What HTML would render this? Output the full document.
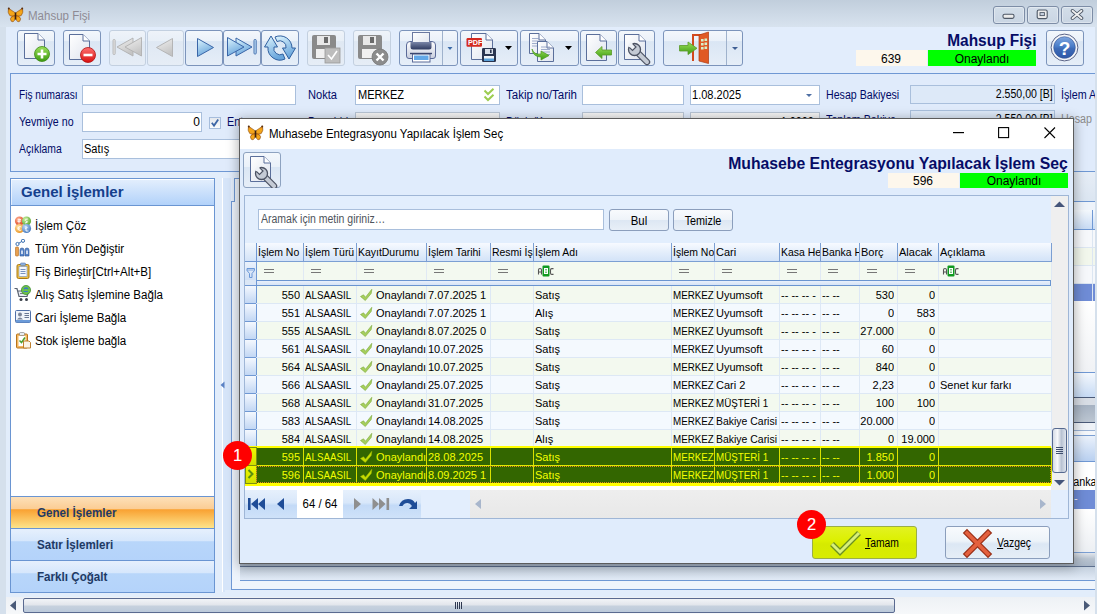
<!DOCTYPE html><html><head><meta charset="utf-8"><style>
*{box-sizing:border-box;margin:0;padding:0}
html,body{width:1097px;height:614px;overflow:hidden}
body{position:relative;background:#e2edfb;font-family:"Liberation Sans",sans-serif}
div{position:absolute}
.tb{position:absolute;border:1px solid #7c94bb;border-radius:3px;background:linear-gradient(#f3f7fc 0%,#eaf1f9 30%,#dae6f4 31%,#e6eef8 100%)}
.tbd{position:absolute;border:1px solid #c3d0e0;border-radius:3px;background:linear-gradient(#eef3f9 0%,#e8eff7 30%,#dfe8f3 31%,#e6edf6 100%)}
.inp{position:absolute;background:#fff;border:1px solid #a7bcd9}
.btn{position:absolute;border:1px solid #8a9dbb;border-radius:3px;background:linear-gradient(#f7f9fc 0%,#edf2f8 45%,#dce6f2 55%,#e6edf6 100%)}
</style></head><body>
<div style="left:0px;top:0px;width:1097px;height:27px;background:linear-gradient(#c1cedc,#d8e3ef)"></div>
<svg style="position:absolute;left:7px;top:7px;" width="17" height="16" viewBox="0 0 17 16"><defs><linearGradient id="bf" x1="0" y1="0" x2="0" y2="1"><stop offset="0" stop-color="#e88a10"/><stop offset="0.5" stop-color="#f6a818"/><stop offset="1" stop-color="#f0a020"/></linearGradient></defs><path d="M8.5 6 L1.5 1.2 Q0.2 5.5 2.8 8.6 Q5 9.8 8.5 8.6Z" fill="url(#bf)" stroke="#8a4a10" stroke-width="0.6"/><path d="M8.5 8.6 Q4 8.6 3.4 11.8 Q3.8 15.2 6 14.8 Q8 13.8 8.5 10.8Z" fill="url(#bf)" stroke="#8a4a10" stroke-width="0.6"/><path d="M8.5 6 L15.5 1.2 Q16.8 5.5 14.2 8.6 Q12 9.8 8.5 8.6Z" fill="url(#bf)" stroke="#8a4a10" stroke-width="0.6"/><path d="M8.5 8.6 Q13 8.6 13.6 11.8 Q13.2 15.2 11 14.8 Q9 13.8 8.5 10.8Z" fill="url(#bf)" stroke="#8a4a10" stroke-width="0.6"/><path d="M8.5 5.5 V12.5" stroke="#3a2010" stroke-width="1.6"/><circle cx="1.8" cy="1.6" r="1" fill="#5a3010"/><circle cx="15.2" cy="1.6" r="1" fill="#5a3010"/></svg>
<div style="left:28px;top:8px;height:16px;line-height:16px;font-size:12px;color:#8e8b94;font-weight:normal;white-space:nowrap;transform:scaleX(0.96);transform-origin:left;">Mahsup Fişi</div>
<div style="left:993px;top:6px;width:32px;height:18px;border:1px solid #7d8da6;border-radius:3px;background:linear-gradient(#d3dee9,#c9d5e3);box-shadow:inset 0 0 0 1px rgba(255,255,255,0.35)"></div>
<div style="left:1027px;top:6px;width:32px;height:18px;border:1px solid #7d8da6;border-radius:3px;background:linear-gradient(#d3dee9,#c9d5e3);box-shadow:inset 0 0 0 1px rgba(255,255,255,0.35)"></div>
<div style="left:1061px;top:6px;width:32px;height:18px;border:1px solid #7d8da6;border-radius:3px;background:linear-gradient(#d3dee9,#c9d5e3);box-shadow:inset 0 0 0 1px rgba(255,255,255,0.35)"></div>
<svg style="position:absolute;left:1002px;top:13px;" width="14" height="7" viewBox="0 0 14 7"><rect x="1" y="1.2" width="11" height="4.2" rx="1.6" fill="#ececec" stroke="#4e5866" stroke-width="1.1"/></svg>
<svg style="position:absolute;left:1036px;top:9px;" width="13" height="11" viewBox="0 0 13 11"><rect x="1.2" y="1" width="10" height="8.6" rx="1.6" fill="#ececec" stroke="#4e5866" stroke-width="1.1"/><rect x="4" y="3.6" width="4.4" height="3" fill="#c8d2e0" stroke="#4e5866" stroke-width="0.9"/></svg>
<svg style="position:absolute;left:1070px;top:9px;" width="14" height="11" viewBox="0 0 14 11"><path d="M2.5 1.8 L11.5 9.2 M11.5 1.8 L2.5 9.2" stroke="#4e5866" stroke-width="3.6" stroke-linecap="round"/><path d="M2.5 1.8 L11.5 9.2 M11.5 1.8 L2.5 9.2" stroke="#efefef" stroke-width="1.8" stroke-linecap="round"/></svg>
<div style="left:0px;top:27px;width:6px;height:587px;background:#d5e0ec"></div>
<div style="left:1090px;top:27px;width:7px;height:587px;background:#d5e0ec"></div>
<div style="left:6px;top:27px;width:1089px;height:46px;background:#e2edfc"></div>
<svg style="position:absolute;left:0;top:0" width="1" height="1"><defs><linearGradient id="pg" x1="0" y1="0" x2="1" y2="1"><stop offset="0" stop-color="#ffffff"/><stop offset="1" stop-color="#dfe4ee"/></linearGradient><linearGradient id="gg" x1="0" y1="0" x2="0" y2="1"><stop offset="0" stop-color="#9be05a"/><stop offset="1" stop-color="#3c9a10"/></linearGradient><linearGradient id="rg" x1="0" y1="0" x2="0" y2="1"><stop offset="0" stop-color="#ff7070"/><stop offset="1" stop-color="#d81010"/></linearGradient><linearGradient id="bl" x1="0" y1="0" x2="0.4" y2="1"><stop offset="0" stop-color="#e0f6fe"/><stop offset="1" stop-color="#6aa6dc"/></linearGradient><linearGradient id="gy" x1="0" y1="0" x2="0.4" y2="1"><stop offset="0" stop-color="#f2f2f2"/><stop offset="1" stop-color="#c4c4c4"/></linearGradient></defs></svg>
<div class="tb" style="left:17px;top:30px;width:38px;height:36px"></div>
<svg style="position:absolute;left:17px;top:30px;" width="38" height="36" viewBox="0 0 38 36"><path d="M7.5 3.5 H21 L27.5 10 V28.5 H7.5Z" fill="url(#pg)" stroke="#5b6f9b" stroke-width="1"/><path d="M21 3.5 V10 H27.5" fill="#fff" stroke="#5b6f9b" stroke-width="1"/><circle cx="25" cy="24" r="7.5" fill="url(#gg)" stroke="#3c8a14" stroke-width="0.8"/><path d="M25 19.5 V28.5 M20.5 24 H29.5" stroke="#fff" stroke-width="2.6"/></svg>
<div class="tb" style="left:63px;top:30px;width:38px;height:36px"></div>
<svg style="position:absolute;left:63px;top:30px;" width="38" height="36" viewBox="0 0 38 36"><path d="M6.5 4.5 H20 L26.5 11 V29.5 H6.5Z" fill="url(#pg)" stroke="#5b6f9b" stroke-width="1"/><path d="M20 4.5 V11 H26.5" fill="#fff" stroke="#5b6f9b" stroke-width="1"/><circle cx="25" cy="25" r="7.5" fill="url(#rg)" stroke="#b01010" stroke-width="0.8"/><path d="M20.5 25 H29.5" stroke="#fff" stroke-width="2.6"/></svg>
<div class="tbd" style="left:109px;top:30px;width:37px;height:36px"></div>
<svg style="position:absolute;left:109px;top:30px;" width="37" height="36" viewBox="0 0 37 36"><rect x="4" y="9.5" width="2.2" height="15" rx="0.8" fill="#e0e0e0" stroke="#b0b0b0" stroke-width="0.8"/><path d="M24 8 V26 L8 17Z" fill="url(#gy)" stroke="#b0b0b0" stroke-width="0.9"/><path d="M32.5 7.5 V26 L16 17Z" fill="url(#gy)" stroke="#b0b0b0" stroke-width="0.9"/></svg>
<div class="tbd" style="left:147px;top:30px;width:37px;height:36px"></div>
<svg style="position:absolute;left:147px;top:30px;" width="37" height="36" viewBox="0 0 37 36"><path d="M25.5 8.5 V26.5 L9.5 17.5Z" fill="url(#gy)" stroke="#b0b0b0" stroke-width="0.9"/></svg>
<div class="tb" style="left:185px;top:30px;width:38px;height:36px"></div>
<svg style="position:absolute;left:185px;top:30px;" width="38" height="36" viewBox="0 0 38 36"><path d="M12.5 8.5 V26.5 L28.5 17.5Z" fill="url(#bl)" stroke="#3a66a8" stroke-width="1"/></svg>
<div class="tb" style="left:223px;top:30px;width:38px;height:36px"></div>
<svg style="position:absolute;left:223px;top:30px;" width="38" height="36" viewBox="0 0 38 36"><path d="M13 8 V26 L29 17Z" fill="url(#bl)" stroke="#3a66a8" stroke-width="1"/><path d="M4.5 7.5 V26 L21 17Z" fill="url(#bl)" stroke="#3a66a8" stroke-width="1"/><rect x="31" y="9.5" width="2.2" height="14.5" rx="0.8" fill="#bfe0f8" stroke="#3a66a8" stroke-width="0.9"/></svg>
<div class="tb" style="left:261px;top:30px;width:38px;height:36px"></div>
<svg style="position:absolute;left:261px;top:30px;" width="38" height="36" viewBox="0 0 38 36"><path d="M3.5 17 L10 6 L16.5 17 L13 17 A6.2 6.2 0 0 0 22 24 L24 29 A12 12 0 0 1 7 17 Z" fill="url(#bl)" stroke="#2f5f9f" stroke-width="1"/><path d="M34.5 18 L28 29 L21.5 18 L25 18 A6.2 6.2 0 0 0 16 11.5 L14 7 A12 12 0 0 1 31 18 Z" fill="url(#bl)" stroke="#2f5f9f" stroke-width="1"/></svg>
<div class="tbd" style="left:307px;top:30px;width:38px;height:36px"></div>
<svg style="position:absolute;left:307px;top:30px;" width="37" height="36" viewBox="0 0 37 36"><rect x="5" y="5" width="24" height="24" rx="2" fill="#8a8a8a"/><rect x="10" y="6" width="13" height="9" fill="#e8e8e8"/><rect x="17" y="7" width="4" height="6" fill="#6a6a6a"/><rect x="9" y="19" width="16" height="9" fill="#f0f0f0"/><rect x="18" y="18" width="15" height="15" fill="#bdbdbd" stroke="#999" stroke-width="0.8"/><path d="M21 25 L24.5 29 L30 21" stroke="#fff" stroke-width="1.6" fill="none"/></svg>
<div class="tbd" style="left:353px;top:30px;width:38px;height:36px"></div>
<svg style="position:absolute;left:353px;top:30px;" width="38" height="36" viewBox="0 0 38 36"><rect x="5" y="5" width="24" height="24" rx="2" fill="#8a8a8a"/><rect x="10" y="6" width="13" height="9" fill="#e8e8e8"/><rect x="17" y="7" width="4" height="6" fill="#6a6a6a"/><rect x="9" y="19" width="16" height="9" fill="#f0f0f0"/><circle cx="27" cy="27" r="8" fill="#8c8c8c" stroke="#777" stroke-width="0.8"/><path d="M23.5 23.5 L30.5 30.5 M30.5 23.5 L23.5 30.5" stroke="#fff" stroke-width="2.4"/></svg>
<div class="tb" style="left:399px;top:30px;width:59px;height:36px"></div>
<div style="left:442px;top:31px;width:1px;height:34px;background:#9fb2cc"></div>
<svg style="position:absolute;left:399px;top:30px;" width="59" height="36" viewBox="0 0 59 36"><defs><linearGradient id="pb" x1="0" y1="0" x2="0" y2="1"><stop offset="0" stop-color="#ffffff"/><stop offset="1" stop-color="#c8cede"/></linearGradient><linearGradient id="pd" x1="0" y1="0" x2="0" y2="1"><stop offset="0" stop-color="#7a86a8"/><stop offset="1" stop-color="#2e3a60"/></linearGradient></defs><path d="M7.5 15 Q7.5 11.5 11 11.5 H33 Q36.5 11.5 36.5 15 V26 Q36.5 28.5 34 28.5 H10 Q7.5 28.5 7.5 26Z" fill="url(#pb)" stroke="#5a6a98" stroke-width="1"/><rect x="13.5" y="2.5" width="17" height="11.5" fill="url(#pg)" stroke="#6a78a0" stroke-width="1"/><path d="M11.5 12 H32.5 V17 Q32.5 19.5 30 19.5 H14 Q11.5 19.5 11.5 17Z" fill="url(#pd)"/><rect x="13.5" y="24" width="17.5" height="8" fill="#fff" stroke="#5a6a98" stroke-width="1"/><rect x="15" y="25.5" width="14.5" height="4.5" fill="#62a8e8"/><path d="M11 23.5 H33" stroke="#3a4670" stroke-width="1.4"/><path d="M48.5 17 L53.5 17 L51 20Z" fill="#3a6aa8"/></svg>
<div class="tb" style="left:460px;top:30px;width:58px;height:36px"></div>
<svg style="position:absolute;left:460px;top:30px;" width="58" height="36" viewBox="0 0 58 36"><path d="M11.5 3.5 H26 L32.5 10 V29.5 H11.5Z" fill="url(#pg)" stroke="#5b6f9b" stroke-width="1"/><path d="M26 3.5 V10 H32.5" fill="#fff" stroke="#5b6f9b" stroke-width="1"/><rect x="6.5" y="8" width="15.5" height="8.8" rx="1.2" fill="#d42a20"/><text x="8" y="15.2" font-size="7.2" font-weight="bold" fill="#fff" font-family="Liberation Sans">PDF</text><rect x="22" y="18" width="14" height="14" rx="1.2" fill="#2a3550"/><rect x="25" y="19" width="8" height="5" fill="#d8dee8"/><rect x="30" y="19.5" width="1.6" height="3.5" fill="#2a3550"/><rect x="24" y="26" width="10" height="5" fill="#f0f4f8"/><rect x="24" y="28.5" width="10" height="2.5" fill="#5aa0d8"/><path d="M45 16 L52 16 L48.5 20Z" fill="#000"/></svg>
<div class="tb" style="left:520px;top:30px;width:59px;height:36px"></div>
<svg style="position:absolute;left:520px;top:30px;" width="59" height="36" viewBox="0 0 59 36"><path d="M9.5 3.5 H19 L25.5 10 V23.5 H9.5Z" fill="url(#pg)" stroke="#5b6f9b" stroke-width="1"/><path d="M19 3.5 V10 H25.5" fill="#fff" stroke="#5b6f9b" stroke-width="1"/><path d="M12 8.5 H19 M12 11 H19 M12 13.5 H19 M12 16 H19" stroke="#8a9ac0" stroke-width="0.8"/><path d="M17.5 11.5 H27 L33.5 18 V31.5 H17.5Z" fill="url(#pg)" stroke="#5b6f9b" stroke-width="1"/><path d="M27 11.5 V18 H33.5" fill="#fff" stroke="#5b6f9b" stroke-width="1"/><path d="M21 17 H30 M21 19.5 H30 M21 22 H30 M21 24.5 H30" stroke="#8a9ac0" stroke-width="0.8"/><path d="M12 19 Q14 25 21 24 V21 L29 25.5 L21 30 V27 Q13 27 12 19Z" fill="url(#gg)" stroke="#4a9a20" stroke-width="0.7"/><path d="M45 16 L52 16 L48.5 20Z" fill="#000"/></svg>
<div class="tb" style="left:580px;top:30px;width:37px;height:36px"></div>
<svg style="position:absolute;left:580px;top:30px;" width="37" height="36" viewBox="0 0 37 36"><path d="M6.5 4.5 H20 L26.5 11 V30.5 H6.5Z" fill="url(#pg)" stroke="#5b6f9b" stroke-width="1"/><path d="M20 4.5 V11 H26.5" fill="#fff" stroke="#5b6f9b" stroke-width="1"/><path d="M15.5 22.5 L22 16.5 V20 H31.5 V25 H22 V28.5Z" fill="url(#gg)" stroke="#5a9a2a" stroke-width="0.8"/></svg>
<div class="tb" style="left:618px;top:30px;width:37px;height:36px"></div>
<svg style="position:absolute;left:618px;top:30px;" width="37" height="36" viewBox="0 0 37 36"><path d="M6.5 4.5 H21 L27.5 11 V29.5 H6.5Z" fill="url(#pg)" stroke="#5b6f9b" stroke-width="1"/><path d="M21 4.5 V11 H27.5" fill="#fff" stroke="#5b6f9b" stroke-width="1"/><path d="M18 21 L29 32" stroke="#4c5262" stroke-width="6.4" stroke-linecap="round"/><path d="M18 21 L29 32" stroke="#c4cad4" stroke-width="4" stroke-linecap="round"/><circle cx="16.5" cy="19.5" r="6" fill="#c4cad4" stroke="#4c5262" stroke-width="1.3"/><path d="M9.5 15.5 L14.5 20.5 L18 17 L13 12Z" fill="#eef1f6"/><path d="M11.3 17.3 L14.5 20.5 L18 17 L14.8 13.8" fill="none" stroke="#4c5262" stroke-width="1.2"/></svg>
<div class="tb" style="left:663px;top:30px;width:80px;height:36px"></div>
<div style="left:726px;top:31px;width:1px;height:34px;background:#9fb2cc"></div>
<svg style="position:absolute;left:663px;top:30px;" width="80" height="36" viewBox="0 0 80 36"><path d="M29 4 H45 V31 H43 V6 H31 V31 H29Z" fill="#d24a1e"/><path d="M36 5 L45.5 2 V33.5 L36 31Z" fill="#e05a24" stroke="#b03a10" stroke-width="0.7"/><path d="M38 9 h2.6 v2.6 h-2.6z M41.5 8.5 h2.6 v2.6 h-2.6z M38 13 h2.6 v2.6 h-2.6z M41.5 12.5 h2.6 v2.6 h-2.6z M38 17 h2.6 v2.6 h-2.6z M41.5 16.5 h2.6 v2.6 h-2.6z" fill="#d8f0c8"/><path d="M16.5 15.5 H25 V12 L34 18.3 L25 24.6 V21 H16.5Z" fill="url(#gg)" stroke="#5a9a2a" stroke-width="0.8"/><path d="M69 17 L75 17 L72 20Z" fill="#3e5f94"/></svg>
<div style="right:61px;top:32px;height:18px;line-height:18px;font-size:16px;color:#060c66;font-weight:bold;white-space:nowrap;transform:scaleX(0.965);transform-origin:right;">Mahsup Fişi</div>
<div style="left:856px;top:50px;width:71px;height:16px;background:#fdf7ec"></div>
<div style="left:591px;width:600px;text-align:center;top:51px;height:16px;line-height:16px;font-size:12px;color:#000;font-weight:normal;white-space:nowrap;">639</div>
<div style="left:928px;top:50px;width:108px;height:16px;background:#00ff00"></div>
<div style="left:682px;width:600px;text-align:center;top:51px;height:16px;line-height:16px;font-size:12px;color:#000;font-weight:normal;white-space:nowrap;">Onaylandı</div>
<div class="tb" style="left:1046px;top:30px;width:38px;height:36px"></div>
<svg style="position:absolute;left:1046px;top:30px;" width="38" height="36" viewBox="0 0 38 36"><defs><linearGradient id="hb" x1="0" y1="0" x2="0" y2="1"><stop offset="0" stop-color="#7ea6e0"/><stop offset="0.45" stop-color="#4a7cc8"/><stop offset="0.55" stop-color="#3d6bb8"/><stop offset="1" stop-color="#2f58a8"/></linearGradient></defs><circle cx="18.5" cy="17.5" r="13.4" fill="#f4f6fa" stroke="#5a6488" stroke-width="1"/><circle cx="18.5" cy="17.5" r="10.8" fill="url(#hb)" stroke="#3a5590" stroke-width="0.6"/><text x="18.5" y="24.5" text-anchor="middle" font-size="19" font-weight="bold" fill="#fff" font-family="Liberation Sans">?</text></svg>
<div style="left:10px;top:73px;width:1095px;height:99px;background:#e0ebfb;border:1px solid #6f98d4"></div>
<div style="left:19px;top:85px;height:20px;line-height:20px;font-size:12.5px;color:#000a66;font-weight:normal;white-space:nowrap;transform:scaleX(0.81);transform-origin:left;">Fiş numarası</div>
<div style="left:82px;top:85px;width:214px;height:20px;background:#fff;border:1px solid #a9bfdc"></div>
<div style="left:308px;top:85px;height:20px;line-height:20px;font-size:12.5px;color:#000a66;font-weight:normal;white-space:nowrap;transform:scaleX(0.89);transform-origin:left;">Nokta</div>
<div style="left:355px;top:85px;width:145px;height:20px;background:#fff;border:1px solid #a9bfdc"></div>
<div style="left:358px;top:85px;height:20px;line-height:20px;font-size:12px;color:#000;font-weight:normal;white-space:nowrap;transform:scaleX(0.92);transform-origin:left;">MERKEZ</div>
<svg style="position:absolute;left:483px;top:88px;" width="12" height="15" viewBox="0 0 12 15"><path d="M1.5 2.5 L5 6 L10.5 0.8" stroke="#9ccc50" stroke-width="2" fill="none"/><path d="M1.5 8.5 L5 12 L10.5 6.8" stroke="#9ccc50" stroke-width="2" fill="none"/></svg>
<div style="left:506px;top:85px;height:20px;line-height:20px;font-size:12.5px;color:#000a66;font-weight:normal;white-space:nowrap;transform:scaleX(0.92);transform-origin:left;">Takip no/Tarih</div>
<div style="left:582px;top:85px;width:102px;height:20px;background:#fff;border:1px solid #a9bfdc"></div>
<div style="left:690px;top:85px;width:130px;height:20px;background:#fff;border:1px solid #a9bfdc"></div>
<div style="left:692px;top:85px;height:20px;line-height:20px;font-size:12px;color:#000;font-weight:normal;white-space:nowrap;transform:scaleX(0.92);transform-origin:left;">1.08.2025</div>
<svg style="position:absolute;left:805px;top:93px;" width="8" height="5" viewBox="0 0 8 5"><path d="M1 1 L7 1 L4 4Z" fill="#4e6fa4"/></svg>
<div style="left:826px;top:85px;height:20px;line-height:20px;font-size:12.5px;color:#000a66;font-weight:normal;white-space:nowrap;transform:scaleX(0.85);transform-origin:left;">Hesap Bakiyesi</div>
<div style="left:910px;top:85px;width:145px;height:19px;background:#dde9f8;border:1px solid #a9bfdc"></div>
<div style="right:44px;top:84px;height:20px;line-height:20px;font-size:12px;color:#000;font-weight:normal;white-space:nowrap;transform:scaleX(0.88);transform-origin:right;">2.550,00 [B]</div>
<div style="left:1061px;top:85px;height:20px;line-height:20px;font-size:12.5px;color:#000a66;font-weight:normal;white-space:nowrap;transform:scaleX(0.86);transform-origin:left;">İşlem Açıklama</div>
<div style="left:19px;top:112px;height:20px;line-height:20px;font-size:12.5px;color:#000a66;font-weight:normal;white-space:nowrap;transform:scaleX(0.85);transform-origin:left;">Yevmiye no</div>
<div style="left:82px;top:112px;width:120px;height:20px;background:#fff;border:1px solid #a9bfdc"></div>
<div style="right:897px;top:112px;height:20px;line-height:20px;font-size:12px;color:#000;font-weight:normal;white-space:nowrap;">0</div>
<div style="left:209px;top:117px;width:12px;height:12px;background:linear-gradient(#e4e8ee,#fafbfc);border:1px solid #a6bddc"></div>
<svg style="position:absolute;left:209px;top:117px;" width="12" height="12" viewBox="0 0 12 12"><path d="M2.8 5.8 L5 8.6 L9.2 2.4" stroke="#3d66a6" stroke-width="1.8" fill="none"/></svg>
<div style="left:227px;top:112px;height:20px;line-height:20px;font-size:12.5px;color:#000a66;font-weight:normal;white-space:nowrap;transform:scaleX(0.86);transform-origin:left;">Entegre</div>
<div style="left:308px;top:112px;height:20px;line-height:20px;font-size:12.5px;color:#000a66;font-weight:normal;white-space:nowrap;transform:scaleX(0.86);transform-origin:left;">Para birimi</div>
<div style="left:506px;top:112px;height:20px;line-height:20px;font-size:12.5px;color:#000a66;font-weight:normal;white-space:nowrap;transform:scaleX(0.86);transform-origin:left;">Döviz/Kur</div>
<div style="left:585px;top:112px;height:20px;line-height:20px;font-size:12px;color:#000;font-weight:normal;white-space:nowrap;transform:scaleX(0.9);transform-origin:left;">TL</div>
<div style="left:355px;top:112px;width:145px;height:20px;background:linear-gradient(#f5f5f5,#e4e4e4);border:1px solid #b8c4d4"></div>
<div style="left:582px;top:112px;width:102px;height:20px;background:linear-gradient(#f5f5f5,#e4e4e4);border:1px solid #b8c4d4"></div>
<div style="left:690px;top:112px;width:130px;height:20px;background:linear-gradient(#f5f5f5,#e4e4e4);border:1px solid #b8c4d4"></div>
<div style="right:283px;top:112px;height:20px;line-height:20px;font-size:12px;color:#000;font-weight:normal;white-space:nowrap;transform:scaleX(0.9);transform-origin:right;">1,0000</div>
<div style="left:826px;top:110px;height:20px;line-height:20px;font-size:12.5px;color:#000a66;font-weight:normal;white-space:nowrap;transform:scaleX(0.86);transform-origin:left;">Toplam Bakiye</div>
<div style="left:910px;top:110px;width:145px;height:19px;background:#dde9f8;border:1px solid #a9bfdc"></div>
<div style="right:44px;top:109px;height:20px;line-height:20px;font-size:12px;color:#000;font-weight:normal;white-space:nowrap;transform:scaleX(0.88);transform-origin:right;">2.550,00 [B]</div>
<div style="left:1061px;top:109px;height:20px;line-height:20px;font-size:12.5px;color:#8c8c8c;font-weight:normal;white-space:nowrap;transform:scaleX(0.86);transform-origin:left;">Hesap</div>
<div style="left:19px;top:139px;height:20px;line-height:20px;font-size:12.5px;color:#000a66;font-weight:normal;white-space:nowrap;transform:scaleX(0.83);transform-origin:left;">Açıklama</div>
<div style="left:82px;top:139px;width:700px;height:20px;background:#fff;border:1px solid #a9bfdc"></div>
<div style="left:84px;top:139px;height:20px;line-height:20px;font-size:12px;color:#000;font-weight:normal;white-space:nowrap;transform:scaleX(0.92);transform-origin:left;">Satış</div>
<div style="left:1095px;top:27px;width:2px;height:587px;background:#d5e0ec"></div>
<div style="left:10px;top:178px;width:205px;height:415px;background:#fff;border:1px solid #6a95d2"></div>
<div style="left:10px;top:178px;width:205px;height:28px;background:linear-gradient(#e4effd,#b2d2fa);border:1px solid #6a95d2;box-shadow:inset 0 1px 0 #fff, inset 1px 0 0 rgba(255,255,255,0.6)"></div>
<div style="left:21px;top:183px;height:18px;line-height:18px;font-size:15px;color:#153f8c;font-weight:bold;white-space:nowrap;">Genel İşlemler</div>
<div style="left:35px;top:218px;height:16px;line-height:16px;font-size:12.5px;color:#000;font-weight:normal;white-space:nowrap;transform:scaleX(0.925);transform-origin:left;">İşlem Çöz</div>
<div style="left:35px;top:241px;height:16px;line-height:16px;font-size:12.5px;color:#000;font-weight:normal;white-space:nowrap;transform:scaleX(0.925);transform-origin:left;">Tüm Yön Değiştir</div>
<div style="left:35px;top:264px;height:16px;line-height:16px;font-size:12.5px;color:#000;font-weight:normal;white-space:nowrap;transform:scaleX(0.925);transform-origin:left;">Fiş Birleştir[Ctrl+Alt+B]</div>
<div style="left:35px;top:287px;height:16px;line-height:16px;font-size:12.5px;color:#000;font-weight:normal;white-space:nowrap;transform:scaleX(0.925);transform-origin:left;">Alış Satış İşlemine Bağla</div>
<div style="left:35px;top:310px;height:16px;line-height:16px;font-size:12.5px;color:#000;font-weight:normal;white-space:nowrap;transform:scaleX(0.925);transform-origin:left;">Cari İşleme Bağla</div>
<div style="left:35px;top:333px;height:16px;line-height:16px;font-size:12.5px;color:#000;font-weight:normal;white-space:nowrap;transform:scaleX(0.925);transform-origin:left;">Stok işleme bağla</div>
<svg style="position:absolute;left:14px;top:216px;" width="18" height="18" viewBox="0 0 18 18"><defs><radialGradient id="c1" cx="0.35" cy="0.3" r="0.8"><stop offset="0" stop-color="#ffb090"/><stop offset="1" stop-color="#d83a18"/></radialGradient><radialGradient id="c2" cx="0.35" cy="0.3" r="0.8"><stop offset="0" stop-color="#c8f0a0"/><stop offset="1" stop-color="#50a028"/></radialGradient><radialGradient id="c3" cx="0.35" cy="0.3" r="0.8"><stop offset="0" stop-color="#ffe0a0"/><stop offset="1" stop-color="#e8901c"/></radialGradient><radialGradient id="c4" cx="0.35" cy="0.3" r="0.8"><stop offset="0" stop-color="#b8d8f8"/><stop offset="1" stop-color="#3a70b8"/></radialGradient></defs><circle cx="5.5" cy="5" r="4.6" fill="url(#c1)"/><circle cx="12.5" cy="5" r="4.6" fill="url(#c2)"/><circle cx="5.5" cy="12.5" r="4.6" fill="url(#c3)"/><circle cx="12.5" cy="12.5" r="4.6" fill="url(#c4)"/><path d="M5 2.5 V7.5 M3.5 4 L7 3.5 M3.5 5.5 L7 5" stroke="#fff" stroke-width="0.9"/><path d="M13.8 3 Q11 2.8 11.3 4.5 Q11.8 5.5 13.3 5.5 Q14.3 6.5 11 7" stroke="#fff" stroke-width="0.9" fill="none"/><path d="M7.3 11 Q6 10 4.5 11 Q3.5 12.5 4.5 14 Q6 15 7.3 14 M3.5 12 H6 M3.5 13 H6" stroke="#fff" stroke-width="0.8" fill="none"/><path d="M12 10 V15 H14.5 M11 12.5 L13.5 11.5" stroke="#fff" stroke-width="0.9" fill="none"/></svg>
<svg style="position:absolute;left:14px;top:239px;" width="18" height="18" viewBox="0 0 18 18"><circle cx="3.5" cy="5" r="1.6" fill="none" stroke="#3a6fb0" stroke-width="1"/><circle cx="9" cy="1.8" r="1.6" fill="none" stroke="#3a6fb0" stroke-width="1"/><path d="M4.8 4.2 L7.6 2.6" stroke="#3a6fb0" stroke-width="1"/><rect x="1.5" y="8" width="3" height="9" rx="0.8" fill="#e8a050" stroke="#b06a20" stroke-width="0.6"/><path d="M6 17 V11 Q6 9 8 9 Q10 9 10 11 V17Z" fill="#5a88cc" stroke="#2a5090" stroke-width="0.6"/><path d="M11 17 V11 Q11 9 13 9 Q15 9 15 11 V17Z" fill="#5a88cc" stroke="#2a5090" stroke-width="0.6"/><rect x="7.3" y="11.5" width="1.4" height="3.5" fill="#fff"/><rect x="12.3" y="11.5" width="1.4" height="3.5" fill="#fff"/></svg>
<svg style="position:absolute;left:14px;top:262px;" width="18" height="18" viewBox="0 0 18 18"><rect x="3" y="2.5" width="12" height="14" rx="1.5" fill="#f0c040" stroke="#a87818" stroke-width="1"/><rect x="5" y="4.5" width="8" height="10" fill="#f4f8fe" stroke="#7890c0" stroke-width="0.6"/><path d="M6.5 7.5 H11.5 M6.5 9.5 H11.5 M6.5 11.5 H11.5" stroke="#5a78b0" stroke-width="0.8"/><rect x="6.5" y="1" width="5" height="2.6" rx="0.8" fill="#8ab0e0" stroke="#5a78b0" stroke-width="0.6"/></svg>
<svg style="position:absolute;left:14px;top:285px;" width="18" height="18" viewBox="0 0 18 18"><path d="M0.5 3.5 H3 L5 11.5 H13 L14.5 6 H4" fill="#e8ecf2" stroke="#5a6270" stroke-width="1.2"/><path d="M6 8.5 H13" stroke="#5a6270" stroke-width="0.8"/><circle cx="7" cy="14.5" r="1.5" fill="#3a404a"/><circle cx="12.5" cy="14.5" r="1.5" fill="#3a404a"/><circle cx="12" cy="5" r="4.6" fill="#6cc04a" stroke="#3a8a2a" stroke-width="0.7"/><path d="M10 4 Q12 2 14 4 M9.5 6.5 H14" stroke="#3a7ac8" stroke-width="1.2" fill="none"/></svg>
<svg style="position:absolute;left:14px;top:308px;" width="18" height="18" viewBox="0 0 18 18"><rect x="1.5" y="2.5" width="15" height="12" rx="1" fill="#f0f4fa" stroke="#5070a8" stroke-width="1"/><rect x="2" y="12" width="14" height="2.5" fill="#6a9ad8"/><circle cx="6" cy="6.5" r="2" fill="#7a8498"/><path d="M3 11.5 Q6 7.5 9 11.5Z" fill="#7a8498"/><path d="M10.5 5.5 H15 M10.5 7.5 H15 M10.5 9.5 H15" stroke="#5a6a88" stroke-width="0.9"/></svg>
<svg style="position:absolute;left:14px;top:331px;" width="18" height="18" viewBox="0 0 18 18"><rect x="2.5" y="3" width="11" height="14" rx="1" fill="#f4b860" stroke="#b8741c" stroke-width="1"/><rect x="4.5" y="5" width="7" height="10" fill="#fff"/><rect x="5.5" y="1.5" width="5" height="3" rx="1" fill="#e8ecf0" stroke="#777" stroke-width="0.6"/><path d="M5.5 9.5 L7.5 11.5 L11 6.5" stroke="#4aa030" stroke-width="1.5" fill="none"/><path d="M9.5 10 H15 L16.5 11.5 V17 H9.5Z" fill="#fbf4e8" stroke="#b8741c" stroke-width="0.9"/></svg>
<div style="left:10px;top:496px;width:205px;height:33px;background:linear-gradient(#fde0b8 0%,#fbcd94 38%,#f9a232 41%,#fbc25e 70%,#fde48a 100%);border:1px solid #6a95d2"></div>
<div style="left:37px;top:504px;height:18px;line-height:18px;font-size:12.5px;color:#1f3a64;font-weight:bold;white-space:nowrap;transform:scaleX(0.93);transform-origin:left;">Genel İşlemler</div>
<div style="left:10px;top:528px;width:205px;height:33px;background:linear-gradient(#e6f0fd 0%,#d6e7fc 38%,#b8d6fa 41%,#b4d3fa 100%);border:1px solid #6a95d2"></div>
<div style="left:37px;top:536px;height:18px;line-height:18px;font-size:12.5px;color:#1f3a64;font-weight:bold;white-space:nowrap;transform:scaleX(0.93);transform-origin:left;">Satır İşlemleri</div>
<div style="left:10px;top:560px;width:205px;height:33px;background:linear-gradient(#e6f0fd 0%,#d6e7fc 38%,#b8d6fa 41%,#b4d3fa 100%);border:1px solid #6a95d2"></div>
<div style="left:37px;top:568px;height:18px;line-height:18px;font-size:12.5px;color:#1f3a64;font-weight:bold;white-space:nowrap;transform:scaleX(0.93);transform-origin:left;">Farklı Çoğalt</div>
<div style="left:215px;top:178px;width:16px;height:415px;background:#e2edfb"></div>
<div style="left:222px;top:178px;width:1px;height:414px;background:#ffffff"></div>
<div style="left:223px;top:178px;width:8px;height:414px;background:#d6e5f9"></div>
<svg style="position:absolute;left:220px;top:381px;" width="5" height="8" viewBox="0 0 5 8"><path d="M4.5 0.5 L0.5 4 L4.5 7.5Z" fill="#5b82c4"/></svg>
<div style="left:231px;top:201px;width:864px;height:389px;background:#e2edfb;border:1px solid #6f98d4"></div>
<div style="left:234px;top:178px;width:861px;height:25px;background:#e2edfb;border:1px solid #6f98d4;border-bottom:none"></div>
<div style="left:235px;top:179px;width:5px;height:23px;background:#eef4fc"></div>
<div style="left:232px;top:202px;width:8px;height:387px;background:#eef4fc"></div>
<div style="left:240px;top:200px;width:855px;height:381px;background:#ffffff;border:1px solid #6f98d4"></div>
<div style="left:1073px;top:172px;width:22px;height:30px;background:linear-gradient(#e6edf6,#dbe5f1)"></div>
<div style="left:1073px;top:201px;width:22px;height:1px;background:#6f98d4"></div>
<div style="left:1073px;top:202px;width:22px;height:8px;background:#eef3fa"></div>
<div style="left:1073px;top:210px;width:22px;height:20px;background:linear-gradient(#f4f8fd,#c8dbf4);border-bottom:1px solid #6f98d4"></div>
<div style="left:1092px;top:210px;width:1px;height:20px;background:#6f98d4"></div>
<div style="left:1073px;top:230px;width:22px;height:17px;background:#f6f8fb"></div>
<div style="left:1073px;top:247px;width:22px;height:1px;background:#dce6f2"></div>
<div style="left:1073px;top:248px;width:22px;height:17px;background:#f2f7ec"></div>
<div style="left:1073px;top:265px;width:22px;height:1px;background:#dce6f2"></div>
<div style="left:1073px;top:266px;width:22px;height:17px;background:#f6f8fb"></div>
<div style="left:1073px;top:283px;width:22px;height:1px;background:#dce6f2"></div>
<div style="left:1073px;top:284px;width:22px;height:17px;background:#6f8cd6"></div>
<div style="left:1092px;top:230px;width:1px;height:71px;background:#dce6f2"></div>
<div style="left:1073px;top:301px;width:22px;height:71px;background:linear-gradient(#ffffff,#f0f2f5)"></div>
<div style="left:1073px;top:372px;width:22px;height:1px;background:#6f98d4"></div>
<div style="left:1073px;top:373px;width:22px;height:24px;background:linear-gradient(#f4f8fd,#c6daf4)"></div>
<div style="left:1073px;top:397px;width:22px;height:1px;background:#4a5a78"></div>
<div style="left:1073px;top:398px;width:22px;height:7px;background:#d8dde5"></div>
<div style="left:1073px;top:405px;width:22px;height:17px;background:linear-gradient(#a6b2c2,#bcc6d2)"></div>
<div style="left:1073px;top:422px;width:22px;height:1px;background:#4a5a78"></div>
<div style="left:1073px;top:423px;width:22px;height:7px;background:#eef2f7"></div>
<div style="left:1073px;top:430px;width:22px;height:1px;background:#9bb3d6"></div>
<div style="left:1073px;top:431px;width:22px;height:4px;background:#f4f7fb"></div>
<div style="left:1073px;top:435px;width:22px;height:1px;background:#7b9fd3"></div>
<div style="left:1073px;top:436px;width:22px;height:25px;background:linear-gradient(#eaf1fb,#b9d0f0)"></div>
<div style="left:1073px;top:461px;width:22px;height:1px;background:#6f98d4"></div>
<div style="left:1073px;top:462px;width:22px;height:28px;background:#ffffff"></div>
<div style="left:1066px;top:474px;height:16px;line-height:16px;font-size:12px;color:#000;font-weight:normal;white-space:nowrap;transform:scaleX(0.9);transform-origin:left;">Banka</div>
<div style="left:1073px;top:490px;width:22px;height:19px;background:#6f8cd6"></div>
<div style="left:1074px;top:490px;height:16px;line-height:16px;font-size:11px;color:#fff;font-weight:normal;white-space:nowrap;">-</div>
<div style="left:1073px;top:509px;width:22px;height:43px;background:linear-gradient(#ffffff,#eceff3)"></div>
<div style="left:240px;top:552px;width:855px;height:1px;background:#7b9fd3"></div>
<div style="left:240px;top:553px;width:855px;height:13px;background:linear-gradient(#e2e6ec 0%,#b8c3d0 45%,#a8b5c6 100%)"></div>
<div style="left:240px;top:566px;width:855px;height:1px;background:#5d6f8e"></div>
<div style="left:240px;top:567px;width:855px;height:13px;background:linear-gradient(#c4d0de,#e2ebf7)"></div>
<div style="left:240px;top:580px;width:855px;height:1px;background:#6f98d4"></div>
<div style="left:232px;top:581px;width:863px;height:8px;background:#f0f5fc"></div>
<div style="left:231px;top:589px;width:864px;height:1px;background:#6f98d4"></div>
<div style="left:225px;top:590px;width:870px;height:7px;background:#e2edfb"></div>
<div style="left:1095px;top:27px;width:2px;height:587px;background:#d5e0ec"></div>
<div style="left:6px;top:597px;width:1089px;height:17px;background:linear-gradient(#eef1f5,#f6f8fa)"></div>
<svg style="position:absolute;left:9px;top:600px;" width="8" height="11" viewBox="0 0 8 11"><path d="M7 0.5 L1 5.5 L7 10.5Z" fill="#4a5a78"/></svg>
<div style="left:23px;top:598px;width:872px;height:15px;border:1px solid #5a6a90;border-radius:2px;background:linear-gradient(#f2f4f7 0%,#e2e6ec 45%,#c6d1de 55%,#bccadb 100%)"></div>
<svg style="position:absolute;left:455px;top:601px;" width="10" height="9" viewBox="0 0 10 9"><rect x="0" y="1" width="1" height="7" fill="#2e3850"/><rect x="2" y="1" width="1" height="7" fill="#2e3850"/><rect x="4" y="1" width="1" height="7" fill="#2e3850"/><rect x="6" y="1" width="1" height="7" fill="#2e3850"/></svg>
<svg style="position:absolute;left:1083px;top:600px;" width="8" height="11" viewBox="0 0 8 11"><path d="M1 0.5 L7 5.5 L1 10.5Z" fill="#4a5a78"/></svg>
<div style="left:239px;top:118px;width:835px;height:446px;box-shadow:0 2px 11px 1px rgba(0,0,0,0.30)"></div>
<div style="left:239px;top:118px;width:835px;height:446px;background:#e0ecfc;border:1px solid #5c5c5c"></div>
<div style="left:240px;top:119px;width:833px;height:30px;background:#ffffff"></div>
<svg style="position:absolute;left:247px;top:125px;" width="17" height="16" viewBox="0 0 17 16"><defs><linearGradient id="bf" x1="0" y1="0" x2="0" y2="1"><stop offset="0" stop-color="#e88a10"/><stop offset="0.5" stop-color="#f6a818"/><stop offset="1" stop-color="#f0a020"/></linearGradient></defs><path d="M8.5 6 L1.5 1.2 Q0.2 5.5 2.8 8.6 Q5 9.8 8.5 8.6Z" fill="url(#bf)" stroke="#8a4a10" stroke-width="0.6"/><path d="M8.5 8.6 Q4 8.6 3.4 11.8 Q3.8 15.2 6 14.8 Q8 13.8 8.5 10.8Z" fill="url(#bf)" stroke="#8a4a10" stroke-width="0.6"/><path d="M8.5 6 L15.5 1.2 Q16.8 5.5 14.2 8.6 Q12 9.8 8.5 8.6Z" fill="url(#bf)" stroke="#8a4a10" stroke-width="0.6"/><path d="M8.5 8.6 Q13 8.6 13.6 11.8 Q13.2 15.2 11 14.8 Q9 13.8 8.5 10.8Z" fill="url(#bf)" stroke="#8a4a10" stroke-width="0.6"/><path d="M8.5 5.5 V12.5" stroke="#3a2010" stroke-width="1.6"/><circle cx="1.8" cy="1.6" r="1" fill="#5a3010"/><circle cx="15.2" cy="1.6" r="1" fill="#5a3010"/></svg>
<div style="left:269px;top:126px;height:16px;line-height:16px;font-size:12.5px;color:#000;font-weight:normal;white-space:nowrap;transform:scaleX(0.92);transform-origin:left;">Muhasebe Entegrasyonu Yapılacak İşlem Seç</div>
<svg style="position:absolute;left:953px;top:132px;" width="12" height="2" viewBox="0 0 12 2"><rect x="0" y="0" width="11" height="1.2" fill="#000"/></svg>
<svg style="position:absolute;left:998px;top:127px;" width="12" height="12" viewBox="0 0 12 12"><rect x="0.6" y="0.6" width="10" height="10" fill="none" stroke="#000" stroke-width="1.1"/></svg>
<svg style="position:absolute;left:1044px;top:127px;" width="12" height="12" viewBox="0 0 12 12"><path d="M0.5 0.5 L11 11 M11 0.5 L0.5 11" stroke="#000" stroke-width="1.1"/></svg>
<div style="left:243px;top:152px;width:38px;height:36px;border:1px solid #8da2c0;border-radius:3px;background:linear-gradient(#f3f7fc 0%,#eaf1f9 40%,#dae6f4 41%,#e6eef8 100%)"></div>
<svg style="position:absolute;left:243px;top:152px;" width="38" height="36" viewBox="0 0 38 36"><path d="M7.5 4.5 H21 L27.5 11 V29.5 H7.5Z" fill="url(#pg)" stroke="#5b6f9b" stroke-width="1"/><path d="M21 4.5 V11 H27.5" fill="#fff" stroke="#5b6f9b" stroke-width="1"/><path d="M20 23 L31 34" stroke="#4c5262" stroke-width="6.4" stroke-linecap="round"/><path d="M20 23 L31 34" stroke="#c4cad4" stroke-width="4" stroke-linecap="round"/><circle cx="18.5" cy="21.5" r="6" fill="#c4cad4" stroke="#4c5262" stroke-width="1.3"/><path d="M11.5 17.5 L16.5 22.5 L20 19 L15 14Z" fill="#eef1f6"/><path d="M13.3 19.3 L16.5 22.5 L20 19 L16.8 15.8" fill="none" stroke="#4c5262" stroke-width="1.2"/></svg>
<div style="right:29px;top:154px;height:19px;line-height:19px;font-size:16px;color:#060c66;font-weight:bold;white-space:nowrap;transform:scaleX(0.985);transform-origin:right;">Muhasebe Entegrasyonu Yapılacak İşlem Seç</div>
<div style="left:888px;top:173px;width:71px;height:15px;background:#fdf7ec"></div>
<div style="left:623px;width:600px;text-align:center;top:173px;height:16px;line-height:16px;font-size:12px;color:#000;font-weight:normal;white-space:nowrap;">596</div>
<div style="left:960px;top:173px;width:108px;height:15px;background:#00ff00"></div>
<div style="left:714px;width:600px;text-align:center;top:173px;height:16px;line-height:16px;font-size:12px;color:#000;font-weight:normal;white-space:nowrap;">Onaylandı</div>
<div style="left:244px;top:195px;width:825px;height:324px;background:#e2eefd;border:1px solid #9fb6d6"></div>
<div style="left:258px;top:209px;width:346px;height:21px;background:#fff;border:1px solid #a9bfdc"></div>
<div style="left:261px;top:210px;height:19px;line-height:19px;font-size:12px;color:#4e545c;font-weight:normal;white-space:nowrap;transform:scaleX(0.875);transform-origin:left;">Aramak için metin giriniz…</div>
<div style="left:609px;top:209px;width:60px;height:22px;border:1px solid #8b9ebc;border-radius:3px;background:linear-gradient(#f8fafd 0%,#eef3f9 50%,#dde7f3 51%,#e8eff7 100%)"></div>
<div style="left:339px;width:600px;text-align:center;top:212px;height:18px;line-height:18px;font-size:12px;color:#000;font-weight:normal;white-space:nowrap;transform:scaleX(0.95);transform-origin:center;">Bul</div>
<div style="left:673px;top:209px;width:60px;height:22px;border:1px solid #8b9ebc;border-radius:3px;background:linear-gradient(#f8fafd 0%,#eef3f9 50%,#dde7f3 51%,#e8eff7 100%)"></div>
<div style="left:403px;width:600px;text-align:center;top:212px;height:18px;line-height:18px;font-size:12px;color:#000;font-weight:normal;white-space:nowrap;transform:scaleX(0.9);transform-origin:center;">Temizle</div>
<div style="left:1051px;top:196px;width:17px;height:294px;background:#efefef"></div>
<svg style="position:absolute;left:1053px;top:199px;" width="13" height="10" viewBox="0 0 13 10"><path d="M1 8 L6.5 2.5 L12 8Z" fill="#45557a"/></svg>
<div style="left:1052px;top:428px;width:15px;height:45px;border:1px solid #56698f;border-radius:3px;background:linear-gradient(90deg,#d4dbe6,#f6f8fb 35%,#b8c2d2 65%,#dfe5ee)"></div>
<svg style="position:absolute;left:1054px;top:445px;" width="11" height="10" viewBox="0 0 11 10"><path d="M2 2.5 H9 M2 4.5 H9 M2 6.5 H9 M2 8.5 H9" stroke="#3e4e6e" stroke-width="1"/></svg>
<svg style="position:absolute;left:1053px;top:478px;" width="13" height="10" viewBox="0 0 13 10"><path d="M1 2 L6.5 7.5 L12 2Z" fill="#45557a"/></svg>
<div style="left:1051px;top:490px;width:17px;height:28px;background:#e3eefd"></div>
<div style="left:245px;top:243px;width:806px;height:19px;background:linear-gradient(#f7faff 0%,#e4eefb 50%,#d3e3f8 100%);border-bottom:1px solid #7b9fd3"></div>
<div style="left:245px;top:243px;width:12px;height:19px;background:linear-gradient(#f2f7fd,#d3e3f8);border-right:1px solid #6f98d4;border-bottom:1px solid #6f98d4"></div>
<div style="left:303px;top:243px;width:1px;height:19px;background:#7b9fd3"></div>
<div style="left:258px;top:244px;width:45px;height:17px;overflow:hidden;white-space:nowrap;font-size:11px;line-height:17px;color:#000"><span style="display:inline-block;transform:scaleX(0.95);transform-origin:left">İşlem No</span></div>
<div style="left:356px;top:243px;width:1px;height:19px;background:#7b9fd3"></div>
<div style="left:305px;top:244px;width:51px;height:17px;overflow:hidden;white-space:nowrap;font-size:11px;line-height:17px;color:#000"><span style="display:inline-block;transform:scaleX(0.95);transform-origin:left">İşlem Türü</span></div>
<div style="left:426px;top:243px;width:1px;height:19px;background:#7b9fd3"></div>
<div style="left:358px;top:244px;width:68px;height:17px;overflow:hidden;white-space:nowrap;font-size:11px;line-height:17px;color:#000"><span style="display:inline-block;transform:scaleX(0.95);transform-origin:left">KayıtDurumu</span></div>
<div style="left:490px;top:243px;width:1px;height:19px;background:#7b9fd3"></div>
<div style="left:428px;top:244px;width:62px;height:17px;overflow:hidden;white-space:nowrap;font-size:11px;line-height:17px;color:#000"><span style="display:inline-block;transform:scaleX(0.95);transform-origin:left">İşlem Tarihi</span></div>
<div style="left:533px;top:243px;width:1px;height:19px;background:#7b9fd3"></div>
<div style="left:492px;top:244px;width:41px;height:17px;overflow:hidden;white-space:nowrap;font-size:11px;line-height:17px;color:#000"><span style="display:inline-block;transform:scaleX(0.95);transform-origin:left">Resmi İşlem</span></div>
<div style="left:671px;top:243px;width:1px;height:19px;background:#7b9fd3"></div>
<div style="left:535px;top:244px;width:136px;height:17px;overflow:hidden;white-space:nowrap;font-size:11px;line-height:17px;color:#000"><span style="display:inline-block;transform:scaleX(0.95);transform-origin:left">İşlem Adı</span></div>
<div style="left:714px;top:243px;width:1px;height:19px;background:#7b9fd3"></div>
<div style="left:673px;top:244px;width:41px;height:17px;overflow:hidden;white-space:nowrap;font-size:11px;line-height:17px;color:#000"><span style="display:inline-block;transform:scaleX(0.95);transform-origin:left">İşlem No</span></div>
<div style="left:779px;top:243px;width:1px;height:19px;background:#7b9fd3"></div>
<div style="left:716px;top:244px;width:63px;height:17px;overflow:hidden;white-space:nowrap;font-size:11px;line-height:17px;color:#000"><span style="display:inline-block;transform:scaleX(1.0);transform-origin:left">Cari</span></div>
<div style="left:820px;top:243px;width:1px;height:19px;background:#7b9fd3"></div>
<div style="left:781px;top:244px;width:39px;height:17px;overflow:hidden;white-space:nowrap;font-size:11px;line-height:17px;color:#000"><span style="display:inline-block;transform:scaleX(0.95);transform-origin:left">Kasa Hesabı</span></div>
<div style="left:859px;top:243px;width:1px;height:19px;background:#7b9fd3"></div>
<div style="left:822px;top:244px;width:37px;height:17px;overflow:hidden;white-space:nowrap;font-size:11px;line-height:17px;color:#000"><span style="display:inline-block;transform:scaleX(0.95);transform-origin:left">Banka Hesabı</span></div>
<div style="left:897px;top:243px;width:1px;height:19px;background:#7b9fd3"></div>
<div style="left:861px;top:244px;width:36px;height:17px;overflow:hidden;white-space:nowrap;font-size:11px;line-height:17px;color:#000"><span style="display:inline-block;transform:scaleX(1.0);transform-origin:left">Borç</span></div>
<div style="left:938px;top:243px;width:1px;height:19px;background:#7b9fd3"></div>
<div style="left:899px;top:244px;width:39px;height:17px;overflow:hidden;white-space:nowrap;font-size:11px;line-height:17px;color:#000"><span style="display:inline-block;transform:scaleX(1.0);transform-origin:left">Alacak</span></div>
<div style="left:1051px;top:243px;width:1px;height:19px;background:#7b9fd3"></div>
<div style="left:940px;top:244px;width:111px;height:17px;overflow:hidden;white-space:nowrap;font-size:11px;line-height:17px;color:#000"><span style="display:inline-block;transform:scaleX(1.0);transform-origin:left">Açıklama</span></div>
<div style="left:245px;top:262px;width:806px;height:18px;background:#f3f9f0"></div>
<div style="left:245px;top:262px;width:12px;height:18px;background:linear-gradient(#eaf2fc,#cfdff5);border-right:1px solid #6f98d4"></div>
<svg style="position:absolute;left:246px;top:267px;" width="10" height="12" viewBox="0 0 10 12"><path d="M1 1.5 H8.5 V3.5 L6 6.5 V10.5 H3.5 V6.5 L1 3.5Z" fill="none" stroke="#6a98d8" stroke-width="1"/><path d="M1 3 H8.5" stroke="#6a98d8" stroke-width="0.8"/></svg>
<div style="left:303px;top:262px;width:1px;height:18px;background:#e0e9f4"></div>
<svg style="position:absolute;left:264px;top:269px;" width="11" height="4" viewBox="0 0 11 4"><path d="M0 0.5 H10 M0 3.5 H10" stroke="#777" stroke-width="1"/></svg>
<div style="left:356px;top:262px;width:1px;height:18px;background:#e0e9f4"></div>
<svg style="position:absolute;left:311px;top:269px;" width="11" height="4" viewBox="0 0 11 4"><path d="M0 0.5 H10 M0 3.5 H10" stroke="#777" stroke-width="1"/></svg>
<div style="left:426px;top:262px;width:1px;height:18px;background:#e0e9f4"></div>
<svg style="position:absolute;left:364px;top:269px;" width="11" height="4" viewBox="0 0 11 4"><path d="M0 0.5 H10 M0 3.5 H10" stroke="#777" stroke-width="1"/></svg>
<div style="left:490px;top:262px;width:1px;height:18px;background:#e0e9f4"></div>
<svg style="position:absolute;left:434px;top:269px;" width="11" height="4" viewBox="0 0 11 4"><path d="M0 0.5 H10 M0 3.5 H10" stroke="#777" stroke-width="1"/></svg>
<div style="left:533px;top:262px;width:1px;height:18px;background:#e0e9f4"></div>
<svg style="position:absolute;left:498px;top:269px;" width="11" height="4" viewBox="0 0 11 4"><path d="M0 0.5 H10 M0 3.5 H10" stroke="#777" stroke-width="1"/></svg>
<div style="left:671px;top:262px;width:1px;height:18px;background:#e0e9f4"></div>
<svg style="position:absolute;left:537px;top:265px;" width="18" height="13" viewBox="0 0 18 13"><path d="M1.5 9.5 V5 Q1.5 3.5 3 3.5 Q4.5 3.5 4.5 5 V9.5 M1.5 7 H4.5" stroke="#555" stroke-width="1.1" fill="none"/><rect x="5.5" y="0.5" width="7" height="11" rx="1" fill="#109a20"/><rect x="7" y="3" width="4" height="6" fill="#fff"/><rect x="8.3" y="4.2" width="1.4" height="1.2" fill="#109a20"/><rect x="8.3" y="6.6" width="1.4" height="1.2" fill="#109a20"/><path d="M16.5 3.6 H14.8 Q13.5 3.6 13.5 5 V8 Q13.5 9.4 14.8 9.4 H16.5" stroke="#555" stroke-width="1.1" fill="none"/></svg>
<div style="left:714px;top:262px;width:1px;height:18px;background:#e0e9f4"></div>
<svg style="position:absolute;left:679px;top:269px;" width="11" height="4" viewBox="0 0 11 4"><path d="M0 0.5 H10 M0 3.5 H10" stroke="#777" stroke-width="1"/></svg>
<div style="left:779px;top:262px;width:1px;height:18px;background:#e0e9f4"></div>
<svg style="position:absolute;left:722px;top:269px;" width="11" height="4" viewBox="0 0 11 4"><path d="M0 0.5 H10 M0 3.5 H10" stroke="#777" stroke-width="1"/></svg>
<div style="left:820px;top:262px;width:1px;height:18px;background:#e0e9f4"></div>
<svg style="position:absolute;left:787px;top:269px;" width="11" height="4" viewBox="0 0 11 4"><path d="M0 0.5 H10 M0 3.5 H10" stroke="#777" stroke-width="1"/></svg>
<div style="left:859px;top:262px;width:1px;height:18px;background:#e0e9f4"></div>
<svg style="position:absolute;left:828px;top:269px;" width="11" height="4" viewBox="0 0 11 4"><path d="M0 0.5 H10 M0 3.5 H10" stroke="#777" stroke-width="1"/></svg>
<div style="left:897px;top:262px;width:1px;height:18px;background:#e0e9f4"></div>
<svg style="position:absolute;left:867px;top:269px;" width="11" height="4" viewBox="0 0 11 4"><path d="M0 0.5 H10 M0 3.5 H10" stroke="#777" stroke-width="1"/></svg>
<div style="left:938px;top:262px;width:1px;height:18px;background:#e0e9f4"></div>
<svg style="position:absolute;left:905px;top:269px;" width="11" height="4" viewBox="0 0 11 4"><path d="M0 0.5 H10 M0 3.5 H10" stroke="#777" stroke-width="1"/></svg>
<div style="left:1051px;top:262px;width:1px;height:18px;background:#e0e9f4"></div>
<svg style="position:absolute;left:942px;top:265px;" width="18" height="13" viewBox="0 0 18 13"><path d="M1.5 9.5 V5 Q1.5 3.5 3 3.5 Q4.5 3.5 4.5 5 V9.5 M1.5 7 H4.5" stroke="#555" stroke-width="1.1" fill="none"/><rect x="5.5" y="0.5" width="7" height="11" rx="1" fill="#109a20"/><rect x="7" y="3" width="4" height="6" fill="#fff"/><rect x="8.3" y="4.2" width="1.4" height="1.2" fill="#109a20"/><rect x="8.3" y="6.6" width="1.4" height="1.2" fill="#109a20"/><path d="M16.5 3.6 H14.8 Q13.5 3.6 13.5 5 V8 Q13.5 9.4 14.8 9.4 H16.5" stroke="#555" stroke-width="1.1" fill="none"/></svg>
<div style="left:245px;top:280px;width:806px;height:6px;background:#f3f9f0"></div>
<div style="left:256px;top:280px;width:795px;height:6px;background:linear-gradient(#e8f0fb,#d6e4f6);border:1px solid #6a95d0"></div>
<div style="left:245px;top:280px;width:12px;height:6px;background:#dbe7f6;border-right:1px solid #6f98d4;border-bottom:1px solid #6f98d4"></div>
<div style="left:245px;top:286px;width:806px;height:18px;background:#f3f9ef"></div>
<div style="left:245px;top:286px;width:12px;height:18px;background:linear-gradient(#f4f8fe,#c2d7f4);border-right:1px solid #6f98d4;border-bottom:1px solid #6f98d4"></div>
<div style="left:256px;top:303px;width:795px;height:1px;background:#dde8f5"></div>
<div style="left:303px;top:286px;width:1px;height:18px;background:#dde8f5"></div>
<div style="left:257px;top:286px;width:43px;height:17px;overflow:hidden;white-space:nowrap;font-size:11px;line-height:18px;color:#000;text-align:right"><span style="display:inline-block;transform:scaleX(1.0);transform-origin:right">550</span></div>
<div style="left:356px;top:286px;width:1px;height:18px;background:#dde8f5"></div>
<div style="left:305px;top:286px;width:51px;height:17px;overflow:hidden;white-space:nowrap;font-size:11px;line-height:18px;color:#000"><span style="display:inline-block;transform:scaleX(0.89);transform-origin:left">ALSAASIL</span></div>
<div style="left:426px;top:286px;width:1px;height:18px;background:#dde8f5"></div>
<svg style="position:absolute;left:360px;top:289px;" width="13" height="13" viewBox="0 0 13 13"><path d="M0.5 7.5 L3.5 5.8 L5.5 8.2 L11.8 0.3 L11.2 4.5 L5.3 11.5Z" fill="#a6cf5c" stroke="#7ba83c" stroke-width="0.6"/></svg>
<div style="left:376px;top:286px;width:50px;height:17px;overflow:hidden;white-space:nowrap;font-size:11px;line-height:18px;color:#000"><span style="display:inline-block;transform:scaleX(1.0);transform-origin:left">Onaylandı</span></div>
<div style="left:490px;top:286px;width:1px;height:18px;background:#dde8f5"></div>
<div style="left:428px;top:286px;width:62px;height:17px;overflow:hidden;white-space:nowrap;font-size:11px;line-height:18px;color:#000"><span style="display:inline-block;transform:scaleX(1.0);transform-origin:left">7.07.2025 1</span></div>
<div style="left:533px;top:286px;width:1px;height:18px;background:#dde8f5"></div>
<div style="left:671px;top:286px;width:1px;height:18px;background:#dde8f5"></div>
<div style="left:535px;top:286px;width:136px;height:17px;overflow:hidden;white-space:nowrap;font-size:11px;line-height:18px;color:#000"><span style="display:inline-block;transform:scaleX(1.0);transform-origin:left">Satış</span></div>
<div style="left:714px;top:286px;width:1px;height:18px;background:#dde8f5"></div>
<div style="left:673px;top:286px;width:41px;height:17px;overflow:hidden;white-space:nowrap;font-size:11px;line-height:18px;color:#000"><span style="display:inline-block;transform:scaleX(0.89);transform-origin:left">MERKEZ</span></div>
<div style="left:779px;top:286px;width:1px;height:18px;background:#dde8f5"></div>
<div style="left:716px;top:286px;width:63px;height:17px;overflow:hidden;white-space:nowrap;font-size:11px;line-height:18px;color:#000"><span style="display:inline-block;transform:scaleX(1.0);transform-origin:left">Uyumsoft</span></div>
<div style="left:820px;top:286px;width:1px;height:18px;background:#dde8f5"></div>
<div style="left:781px;top:286px;width:39px;height:17px;overflow:hidden;white-space:nowrap;font-size:11px;line-height:18px;color:#000"><span style="display:inline-block;transform:scaleX(1.0);transform-origin:left">-- -- -- -</span></div>
<div style="left:859px;top:286px;width:1px;height:18px;background:#dde8f5"></div>
<div style="left:822px;top:286px;width:37px;height:17px;overflow:hidden;white-space:nowrap;font-size:11px;line-height:18px;color:#000"><span style="display:inline-block;transform:scaleX(1.0);transform-origin:left">-- --</span></div>
<div style="left:897px;top:286px;width:1px;height:18px;background:#dde8f5"></div>
<div style="left:860px;top:286px;width:34px;height:17px;overflow:hidden;white-space:nowrap;font-size:11px;line-height:18px;color:#000;text-align:right"><span style="display:inline-block;transform:scaleX(1.0);transform-origin:right">530</span></div>
<div style="left:938px;top:286px;width:1px;height:18px;background:#dde8f5"></div>
<div style="left:898px;top:286px;width:37px;height:17px;overflow:hidden;white-space:nowrap;font-size:11px;line-height:18px;color:#000;text-align:right"><span style="display:inline-block;transform:scaleX(1.0);transform-origin:right">0</span></div>
<div style="left:1051px;top:286px;width:1px;height:18px;background:#dde8f5"></div>
<div style="left:245px;top:304px;width:806px;height:18px;background:#f4f9fe"></div>
<div style="left:245px;top:304px;width:12px;height:18px;background:linear-gradient(#f4f8fe,#c2d7f4);border-right:1px solid #6f98d4;border-bottom:1px solid #6f98d4"></div>
<div style="left:256px;top:321px;width:795px;height:1px;background:#dde8f5"></div>
<div style="left:303px;top:304px;width:1px;height:18px;background:#dde8f5"></div>
<div style="left:257px;top:304px;width:43px;height:17px;overflow:hidden;white-space:nowrap;font-size:11px;line-height:18px;color:#000;text-align:right"><span style="display:inline-block;transform:scaleX(1.0);transform-origin:right">551</span></div>
<div style="left:356px;top:304px;width:1px;height:18px;background:#dde8f5"></div>
<div style="left:305px;top:304px;width:51px;height:17px;overflow:hidden;white-space:nowrap;font-size:11px;line-height:18px;color:#000"><span style="display:inline-block;transform:scaleX(0.89);transform-origin:left">ALSAASIL</span></div>
<div style="left:426px;top:304px;width:1px;height:18px;background:#dde8f5"></div>
<svg style="position:absolute;left:360px;top:307px;" width="13" height="13" viewBox="0 0 13 13"><path d="M0.5 7.5 L3.5 5.8 L5.5 8.2 L11.8 0.3 L11.2 4.5 L5.3 11.5Z" fill="#a6cf5c" stroke="#7ba83c" stroke-width="0.6"/></svg>
<div style="left:376px;top:304px;width:50px;height:17px;overflow:hidden;white-space:nowrap;font-size:11px;line-height:18px;color:#000"><span style="display:inline-block;transform:scaleX(1.0);transform-origin:left">Onaylandı</span></div>
<div style="left:490px;top:304px;width:1px;height:18px;background:#dde8f5"></div>
<div style="left:428px;top:304px;width:62px;height:17px;overflow:hidden;white-space:nowrap;font-size:11px;line-height:18px;color:#000"><span style="display:inline-block;transform:scaleX(1.0);transform-origin:left">7.07.2025 1</span></div>
<div style="left:533px;top:304px;width:1px;height:18px;background:#dde8f5"></div>
<div style="left:671px;top:304px;width:1px;height:18px;background:#dde8f5"></div>
<div style="left:535px;top:304px;width:136px;height:17px;overflow:hidden;white-space:nowrap;font-size:11px;line-height:18px;color:#000"><span style="display:inline-block;transform:scaleX(1.0);transform-origin:left">Alış</span></div>
<div style="left:714px;top:304px;width:1px;height:18px;background:#dde8f5"></div>
<div style="left:673px;top:304px;width:41px;height:17px;overflow:hidden;white-space:nowrap;font-size:11px;line-height:18px;color:#000"><span style="display:inline-block;transform:scaleX(0.89);transform-origin:left">MERKEZ</span></div>
<div style="left:779px;top:304px;width:1px;height:18px;background:#dde8f5"></div>
<div style="left:716px;top:304px;width:63px;height:17px;overflow:hidden;white-space:nowrap;font-size:11px;line-height:18px;color:#000"><span style="display:inline-block;transform:scaleX(1.0);transform-origin:left">Uyumsoft</span></div>
<div style="left:820px;top:304px;width:1px;height:18px;background:#dde8f5"></div>
<div style="left:781px;top:304px;width:39px;height:17px;overflow:hidden;white-space:nowrap;font-size:11px;line-height:18px;color:#000"><span style="display:inline-block;transform:scaleX(1.0);transform-origin:left">-- -- -- -</span></div>
<div style="left:859px;top:304px;width:1px;height:18px;background:#dde8f5"></div>
<div style="left:822px;top:304px;width:37px;height:17px;overflow:hidden;white-space:nowrap;font-size:11px;line-height:18px;color:#000"><span style="display:inline-block;transform:scaleX(1.0);transform-origin:left">-- --</span></div>
<div style="left:897px;top:304px;width:1px;height:18px;background:#dde8f5"></div>
<div style="left:860px;top:304px;width:34px;height:17px;overflow:hidden;white-space:nowrap;font-size:11px;line-height:18px;color:#000;text-align:right"><span style="display:inline-block;transform:scaleX(1.0);transform-origin:right">0</span></div>
<div style="left:938px;top:304px;width:1px;height:18px;background:#dde8f5"></div>
<div style="left:898px;top:304px;width:37px;height:17px;overflow:hidden;white-space:nowrap;font-size:11px;line-height:18px;color:#000;text-align:right"><span style="display:inline-block;transform:scaleX(1.0);transform-origin:right">583</span></div>
<div style="left:1051px;top:304px;width:1px;height:18px;background:#dde8f5"></div>
<div style="left:245px;top:322px;width:806px;height:18px;background:#f3f9ef"></div>
<div style="left:245px;top:322px;width:12px;height:18px;background:linear-gradient(#f4f8fe,#c2d7f4);border-right:1px solid #6f98d4;border-bottom:1px solid #6f98d4"></div>
<div style="left:256px;top:339px;width:795px;height:1px;background:#dde8f5"></div>
<div style="left:303px;top:322px;width:1px;height:18px;background:#dde8f5"></div>
<div style="left:257px;top:322px;width:43px;height:17px;overflow:hidden;white-space:nowrap;font-size:11px;line-height:18px;color:#000;text-align:right"><span style="display:inline-block;transform:scaleX(1.0);transform-origin:right">555</span></div>
<div style="left:356px;top:322px;width:1px;height:18px;background:#dde8f5"></div>
<div style="left:305px;top:322px;width:51px;height:17px;overflow:hidden;white-space:nowrap;font-size:11px;line-height:18px;color:#000"><span style="display:inline-block;transform:scaleX(0.89);transform-origin:left">ALSAASIL</span></div>
<div style="left:426px;top:322px;width:1px;height:18px;background:#dde8f5"></div>
<svg style="position:absolute;left:360px;top:325px;" width="13" height="13" viewBox="0 0 13 13"><path d="M0.5 7.5 L3.5 5.8 L5.5 8.2 L11.8 0.3 L11.2 4.5 L5.3 11.5Z" fill="#a6cf5c" stroke="#7ba83c" stroke-width="0.6"/></svg>
<div style="left:376px;top:322px;width:50px;height:17px;overflow:hidden;white-space:nowrap;font-size:11px;line-height:18px;color:#000"><span style="display:inline-block;transform:scaleX(1.0);transform-origin:left">Onaylandı</span></div>
<div style="left:490px;top:322px;width:1px;height:18px;background:#dde8f5"></div>
<div style="left:428px;top:322px;width:62px;height:17px;overflow:hidden;white-space:nowrap;font-size:11px;line-height:18px;color:#000"><span style="display:inline-block;transform:scaleX(1.0);transform-origin:left">8.07.2025 0</span></div>
<div style="left:533px;top:322px;width:1px;height:18px;background:#dde8f5"></div>
<div style="left:671px;top:322px;width:1px;height:18px;background:#dde8f5"></div>
<div style="left:535px;top:322px;width:136px;height:17px;overflow:hidden;white-space:nowrap;font-size:11px;line-height:18px;color:#000"><span style="display:inline-block;transform:scaleX(1.0);transform-origin:left">Satış</span></div>
<div style="left:714px;top:322px;width:1px;height:18px;background:#dde8f5"></div>
<div style="left:673px;top:322px;width:41px;height:17px;overflow:hidden;white-space:nowrap;font-size:11px;line-height:18px;color:#000"><span style="display:inline-block;transform:scaleX(0.89);transform-origin:left">MERKEZ</span></div>
<div style="left:779px;top:322px;width:1px;height:18px;background:#dde8f5"></div>
<div style="left:716px;top:322px;width:63px;height:17px;overflow:hidden;white-space:nowrap;font-size:11px;line-height:18px;color:#000"><span style="display:inline-block;transform:scaleX(1.0);transform-origin:left">Uyumsoft</span></div>
<div style="left:820px;top:322px;width:1px;height:18px;background:#dde8f5"></div>
<div style="left:781px;top:322px;width:39px;height:17px;overflow:hidden;white-space:nowrap;font-size:11px;line-height:18px;color:#000"><span style="display:inline-block;transform:scaleX(1.0);transform-origin:left">-- -- -- -</span></div>
<div style="left:859px;top:322px;width:1px;height:18px;background:#dde8f5"></div>
<div style="left:822px;top:322px;width:37px;height:17px;overflow:hidden;white-space:nowrap;font-size:11px;line-height:18px;color:#000"><span style="display:inline-block;transform:scaleX(1.0);transform-origin:left">-- --</span></div>
<div style="left:897px;top:322px;width:1px;height:18px;background:#dde8f5"></div>
<div style="left:860px;top:322px;width:34px;height:17px;overflow:hidden;white-space:nowrap;font-size:11px;line-height:18px;color:#000;text-align:right"><span style="display:inline-block;transform:scaleX(1.0);transform-origin:right">27.000</span></div>
<div style="left:938px;top:322px;width:1px;height:18px;background:#dde8f5"></div>
<div style="left:898px;top:322px;width:37px;height:17px;overflow:hidden;white-space:nowrap;font-size:11px;line-height:18px;color:#000;text-align:right"><span style="display:inline-block;transform:scaleX(1.0);transform-origin:right">0</span></div>
<div style="left:1051px;top:322px;width:1px;height:18px;background:#dde8f5"></div>
<div style="left:245px;top:340px;width:806px;height:18px;background:#f4f9fe"></div>
<div style="left:245px;top:340px;width:12px;height:18px;background:linear-gradient(#f4f8fe,#c2d7f4);border-right:1px solid #6f98d4;border-bottom:1px solid #6f98d4"></div>
<div style="left:256px;top:357px;width:795px;height:1px;background:#dde8f5"></div>
<div style="left:303px;top:340px;width:1px;height:18px;background:#dde8f5"></div>
<div style="left:257px;top:340px;width:43px;height:17px;overflow:hidden;white-space:nowrap;font-size:11px;line-height:18px;color:#000;text-align:right"><span style="display:inline-block;transform:scaleX(1.0);transform-origin:right">561</span></div>
<div style="left:356px;top:340px;width:1px;height:18px;background:#dde8f5"></div>
<div style="left:305px;top:340px;width:51px;height:17px;overflow:hidden;white-space:nowrap;font-size:11px;line-height:18px;color:#000"><span style="display:inline-block;transform:scaleX(0.89);transform-origin:left">ALSAASIL</span></div>
<div style="left:426px;top:340px;width:1px;height:18px;background:#dde8f5"></div>
<svg style="position:absolute;left:360px;top:343px;" width="13" height="13" viewBox="0 0 13 13"><path d="M0.5 7.5 L3.5 5.8 L5.5 8.2 L11.8 0.3 L11.2 4.5 L5.3 11.5Z" fill="#a6cf5c" stroke="#7ba83c" stroke-width="0.6"/></svg>
<div style="left:376px;top:340px;width:50px;height:17px;overflow:hidden;white-space:nowrap;font-size:11px;line-height:18px;color:#000"><span style="display:inline-block;transform:scaleX(1.0);transform-origin:left">Onaylandı</span></div>
<div style="left:490px;top:340px;width:1px;height:18px;background:#dde8f5"></div>
<div style="left:428px;top:340px;width:62px;height:17px;overflow:hidden;white-space:nowrap;font-size:11px;line-height:18px;color:#000"><span style="display:inline-block;transform:scaleX(1.0);transform-origin:left">10.07.2025</span></div>
<div style="left:533px;top:340px;width:1px;height:18px;background:#dde8f5"></div>
<div style="left:671px;top:340px;width:1px;height:18px;background:#dde8f5"></div>
<div style="left:535px;top:340px;width:136px;height:17px;overflow:hidden;white-space:nowrap;font-size:11px;line-height:18px;color:#000"><span style="display:inline-block;transform:scaleX(1.0);transform-origin:left">Satış</span></div>
<div style="left:714px;top:340px;width:1px;height:18px;background:#dde8f5"></div>
<div style="left:673px;top:340px;width:41px;height:17px;overflow:hidden;white-space:nowrap;font-size:11px;line-height:18px;color:#000"><span style="display:inline-block;transform:scaleX(0.89);transform-origin:left">MERKEZ</span></div>
<div style="left:779px;top:340px;width:1px;height:18px;background:#dde8f5"></div>
<div style="left:716px;top:340px;width:63px;height:17px;overflow:hidden;white-space:nowrap;font-size:11px;line-height:18px;color:#000"><span style="display:inline-block;transform:scaleX(1.0);transform-origin:left">Uyumsoft</span></div>
<div style="left:820px;top:340px;width:1px;height:18px;background:#dde8f5"></div>
<div style="left:781px;top:340px;width:39px;height:17px;overflow:hidden;white-space:nowrap;font-size:11px;line-height:18px;color:#000"><span style="display:inline-block;transform:scaleX(1.0);transform-origin:left">-- -- -- -</span></div>
<div style="left:859px;top:340px;width:1px;height:18px;background:#dde8f5"></div>
<div style="left:822px;top:340px;width:37px;height:17px;overflow:hidden;white-space:nowrap;font-size:11px;line-height:18px;color:#000"><span style="display:inline-block;transform:scaleX(1.0);transform-origin:left">-- --</span></div>
<div style="left:897px;top:340px;width:1px;height:18px;background:#dde8f5"></div>
<div style="left:860px;top:340px;width:34px;height:17px;overflow:hidden;white-space:nowrap;font-size:11px;line-height:18px;color:#000;text-align:right"><span style="display:inline-block;transform:scaleX(1.0);transform-origin:right">60</span></div>
<div style="left:938px;top:340px;width:1px;height:18px;background:#dde8f5"></div>
<div style="left:898px;top:340px;width:37px;height:17px;overflow:hidden;white-space:nowrap;font-size:11px;line-height:18px;color:#000;text-align:right"><span style="display:inline-block;transform:scaleX(1.0);transform-origin:right">0</span></div>
<div style="left:1051px;top:340px;width:1px;height:18px;background:#dde8f5"></div>
<div style="left:245px;top:358px;width:806px;height:18px;background:#f3f9ef"></div>
<div style="left:245px;top:358px;width:12px;height:18px;background:linear-gradient(#f4f8fe,#c2d7f4);border-right:1px solid #6f98d4;border-bottom:1px solid #6f98d4"></div>
<div style="left:256px;top:375px;width:795px;height:1px;background:#dde8f5"></div>
<div style="left:303px;top:358px;width:1px;height:18px;background:#dde8f5"></div>
<div style="left:257px;top:358px;width:43px;height:17px;overflow:hidden;white-space:nowrap;font-size:11px;line-height:18px;color:#000;text-align:right"><span style="display:inline-block;transform:scaleX(1.0);transform-origin:right">564</span></div>
<div style="left:356px;top:358px;width:1px;height:18px;background:#dde8f5"></div>
<div style="left:305px;top:358px;width:51px;height:17px;overflow:hidden;white-space:nowrap;font-size:11px;line-height:18px;color:#000"><span style="display:inline-block;transform:scaleX(0.89);transform-origin:left">ALSAASIL</span></div>
<div style="left:426px;top:358px;width:1px;height:18px;background:#dde8f5"></div>
<svg style="position:absolute;left:360px;top:361px;" width="13" height="13" viewBox="0 0 13 13"><path d="M0.5 7.5 L3.5 5.8 L5.5 8.2 L11.8 0.3 L11.2 4.5 L5.3 11.5Z" fill="#a6cf5c" stroke="#7ba83c" stroke-width="0.6"/></svg>
<div style="left:376px;top:358px;width:50px;height:17px;overflow:hidden;white-space:nowrap;font-size:11px;line-height:18px;color:#000"><span style="display:inline-block;transform:scaleX(1.0);transform-origin:left">Onaylandı</span></div>
<div style="left:490px;top:358px;width:1px;height:18px;background:#dde8f5"></div>
<div style="left:428px;top:358px;width:62px;height:17px;overflow:hidden;white-space:nowrap;font-size:11px;line-height:18px;color:#000"><span style="display:inline-block;transform:scaleX(1.0);transform-origin:left">10.07.2025</span></div>
<div style="left:533px;top:358px;width:1px;height:18px;background:#dde8f5"></div>
<div style="left:671px;top:358px;width:1px;height:18px;background:#dde8f5"></div>
<div style="left:535px;top:358px;width:136px;height:17px;overflow:hidden;white-space:nowrap;font-size:11px;line-height:18px;color:#000"><span style="display:inline-block;transform:scaleX(1.0);transform-origin:left">Satış</span></div>
<div style="left:714px;top:358px;width:1px;height:18px;background:#dde8f5"></div>
<div style="left:673px;top:358px;width:41px;height:17px;overflow:hidden;white-space:nowrap;font-size:11px;line-height:18px;color:#000"><span style="display:inline-block;transform:scaleX(0.89);transform-origin:left">MERKEZ</span></div>
<div style="left:779px;top:358px;width:1px;height:18px;background:#dde8f5"></div>
<div style="left:716px;top:358px;width:63px;height:17px;overflow:hidden;white-space:nowrap;font-size:11px;line-height:18px;color:#000"><span style="display:inline-block;transform:scaleX(1.0);transform-origin:left">Uyumsoft</span></div>
<div style="left:820px;top:358px;width:1px;height:18px;background:#dde8f5"></div>
<div style="left:781px;top:358px;width:39px;height:17px;overflow:hidden;white-space:nowrap;font-size:11px;line-height:18px;color:#000"><span style="display:inline-block;transform:scaleX(1.0);transform-origin:left">-- -- -- -</span></div>
<div style="left:859px;top:358px;width:1px;height:18px;background:#dde8f5"></div>
<div style="left:822px;top:358px;width:37px;height:17px;overflow:hidden;white-space:nowrap;font-size:11px;line-height:18px;color:#000"><span style="display:inline-block;transform:scaleX(1.0);transform-origin:left">-- --</span></div>
<div style="left:897px;top:358px;width:1px;height:18px;background:#dde8f5"></div>
<div style="left:860px;top:358px;width:34px;height:17px;overflow:hidden;white-space:nowrap;font-size:11px;line-height:18px;color:#000;text-align:right"><span style="display:inline-block;transform:scaleX(1.0);transform-origin:right">840</span></div>
<div style="left:938px;top:358px;width:1px;height:18px;background:#dde8f5"></div>
<div style="left:898px;top:358px;width:37px;height:17px;overflow:hidden;white-space:nowrap;font-size:11px;line-height:18px;color:#000;text-align:right"><span style="display:inline-block;transform:scaleX(1.0);transform-origin:right">0</span></div>
<div style="left:1051px;top:358px;width:1px;height:18px;background:#dde8f5"></div>
<div style="left:245px;top:376px;width:806px;height:18px;background:#f4f9fe"></div>
<div style="left:245px;top:376px;width:12px;height:18px;background:linear-gradient(#f4f8fe,#c2d7f4);border-right:1px solid #6f98d4;border-bottom:1px solid #6f98d4"></div>
<div style="left:256px;top:393px;width:795px;height:1px;background:#dde8f5"></div>
<div style="left:303px;top:376px;width:1px;height:18px;background:#dde8f5"></div>
<div style="left:257px;top:376px;width:43px;height:17px;overflow:hidden;white-space:nowrap;font-size:11px;line-height:18px;color:#000;text-align:right"><span style="display:inline-block;transform:scaleX(1.0);transform-origin:right">566</span></div>
<div style="left:356px;top:376px;width:1px;height:18px;background:#dde8f5"></div>
<div style="left:305px;top:376px;width:51px;height:17px;overflow:hidden;white-space:nowrap;font-size:11px;line-height:18px;color:#000"><span style="display:inline-block;transform:scaleX(0.89);transform-origin:left">ALSAASIL</span></div>
<div style="left:426px;top:376px;width:1px;height:18px;background:#dde8f5"></div>
<svg style="position:absolute;left:360px;top:379px;" width="13" height="13" viewBox="0 0 13 13"><path d="M0.5 7.5 L3.5 5.8 L5.5 8.2 L11.8 0.3 L11.2 4.5 L5.3 11.5Z" fill="#a6cf5c" stroke="#7ba83c" stroke-width="0.6"/></svg>
<div style="left:376px;top:376px;width:50px;height:17px;overflow:hidden;white-space:nowrap;font-size:11px;line-height:18px;color:#000"><span style="display:inline-block;transform:scaleX(1.0);transform-origin:left">Onaylandı</span></div>
<div style="left:490px;top:376px;width:1px;height:18px;background:#dde8f5"></div>
<div style="left:428px;top:376px;width:62px;height:17px;overflow:hidden;white-space:nowrap;font-size:11px;line-height:18px;color:#000"><span style="display:inline-block;transform:scaleX(1.0);transform-origin:left">25.07.2025</span></div>
<div style="left:533px;top:376px;width:1px;height:18px;background:#dde8f5"></div>
<div style="left:671px;top:376px;width:1px;height:18px;background:#dde8f5"></div>
<div style="left:535px;top:376px;width:136px;height:17px;overflow:hidden;white-space:nowrap;font-size:11px;line-height:18px;color:#000"><span style="display:inline-block;transform:scaleX(1.0);transform-origin:left">Satış</span></div>
<div style="left:714px;top:376px;width:1px;height:18px;background:#dde8f5"></div>
<div style="left:673px;top:376px;width:41px;height:17px;overflow:hidden;white-space:nowrap;font-size:11px;line-height:18px;color:#000"><span style="display:inline-block;transform:scaleX(0.89);transform-origin:left">MERKEZ</span></div>
<div style="left:779px;top:376px;width:1px;height:18px;background:#dde8f5"></div>
<div style="left:716px;top:376px;width:63px;height:17px;overflow:hidden;white-space:nowrap;font-size:11px;line-height:18px;color:#000"><span style="display:inline-block;transform:scaleX(1.0);transform-origin:left">Cari 2</span></div>
<div style="left:820px;top:376px;width:1px;height:18px;background:#dde8f5"></div>
<div style="left:781px;top:376px;width:39px;height:17px;overflow:hidden;white-space:nowrap;font-size:11px;line-height:18px;color:#000"><span style="display:inline-block;transform:scaleX(1.0);transform-origin:left">-- -- -- -</span></div>
<div style="left:859px;top:376px;width:1px;height:18px;background:#dde8f5"></div>
<div style="left:822px;top:376px;width:37px;height:17px;overflow:hidden;white-space:nowrap;font-size:11px;line-height:18px;color:#000"><span style="display:inline-block;transform:scaleX(1.0);transform-origin:left">-- --</span></div>
<div style="left:897px;top:376px;width:1px;height:18px;background:#dde8f5"></div>
<div style="left:860px;top:376px;width:34px;height:17px;overflow:hidden;white-space:nowrap;font-size:11px;line-height:18px;color:#000;text-align:right"><span style="display:inline-block;transform:scaleX(1.0);transform-origin:right">2,23</span></div>
<div style="left:938px;top:376px;width:1px;height:18px;background:#dde8f5"></div>
<div style="left:898px;top:376px;width:37px;height:17px;overflow:hidden;white-space:nowrap;font-size:11px;line-height:18px;color:#000;text-align:right"><span style="display:inline-block;transform:scaleX(1.0);transform-origin:right">0</span></div>
<div style="left:1051px;top:376px;width:1px;height:18px;background:#dde8f5"></div>
<div style="left:940px;top:376px;width:111px;height:17px;overflow:hidden;white-space:nowrap;font-size:11px;line-height:18px;color:#000"><span style="display:inline-block;transform:scaleX(1.0);transform-origin:left">Senet kur farkı</span></div>
<div style="left:245px;top:394px;width:806px;height:18px;background:#f3f9ef"></div>
<div style="left:245px;top:394px;width:12px;height:18px;background:linear-gradient(#f4f8fe,#c2d7f4);border-right:1px solid #6f98d4;border-bottom:1px solid #6f98d4"></div>
<div style="left:256px;top:411px;width:795px;height:1px;background:#dde8f5"></div>
<div style="left:303px;top:394px;width:1px;height:18px;background:#dde8f5"></div>
<div style="left:257px;top:394px;width:43px;height:17px;overflow:hidden;white-space:nowrap;font-size:11px;line-height:18px;color:#000;text-align:right"><span style="display:inline-block;transform:scaleX(1.0);transform-origin:right">568</span></div>
<div style="left:356px;top:394px;width:1px;height:18px;background:#dde8f5"></div>
<div style="left:305px;top:394px;width:51px;height:17px;overflow:hidden;white-space:nowrap;font-size:11px;line-height:18px;color:#000"><span style="display:inline-block;transform:scaleX(0.89);transform-origin:left">ALSAASIL</span></div>
<div style="left:426px;top:394px;width:1px;height:18px;background:#dde8f5"></div>
<svg style="position:absolute;left:360px;top:397px;" width="13" height="13" viewBox="0 0 13 13"><path d="M0.5 7.5 L3.5 5.8 L5.5 8.2 L11.8 0.3 L11.2 4.5 L5.3 11.5Z" fill="#a6cf5c" stroke="#7ba83c" stroke-width="0.6"/></svg>
<div style="left:376px;top:394px;width:50px;height:17px;overflow:hidden;white-space:nowrap;font-size:11px;line-height:18px;color:#000"><span style="display:inline-block;transform:scaleX(1.0);transform-origin:left">Onaylandı</span></div>
<div style="left:490px;top:394px;width:1px;height:18px;background:#dde8f5"></div>
<div style="left:428px;top:394px;width:62px;height:17px;overflow:hidden;white-space:nowrap;font-size:11px;line-height:18px;color:#000"><span style="display:inline-block;transform:scaleX(1.0);transform-origin:left">31.07.2025</span></div>
<div style="left:533px;top:394px;width:1px;height:18px;background:#dde8f5"></div>
<div style="left:671px;top:394px;width:1px;height:18px;background:#dde8f5"></div>
<div style="left:535px;top:394px;width:136px;height:17px;overflow:hidden;white-space:nowrap;font-size:11px;line-height:18px;color:#000"><span style="display:inline-block;transform:scaleX(1.0);transform-origin:left">Satış</span></div>
<div style="left:714px;top:394px;width:1px;height:18px;background:#dde8f5"></div>
<div style="left:673px;top:394px;width:41px;height:17px;overflow:hidden;white-space:nowrap;font-size:11px;line-height:18px;color:#000"><span style="display:inline-block;transform:scaleX(0.89);transform-origin:left">MERKEZ</span></div>
<div style="left:779px;top:394px;width:1px;height:18px;background:#dde8f5"></div>
<div style="left:716px;top:394px;width:63px;height:17px;overflow:hidden;white-space:nowrap;font-size:11px;line-height:18px;color:#000"><span style="display:inline-block;transform:scaleX(0.89);transform-origin:left">MÜŞTERİ 1</span></div>
<div style="left:820px;top:394px;width:1px;height:18px;background:#dde8f5"></div>
<div style="left:781px;top:394px;width:39px;height:17px;overflow:hidden;white-space:nowrap;font-size:11px;line-height:18px;color:#000"><span style="display:inline-block;transform:scaleX(1.0);transform-origin:left">-- -- -- -</span></div>
<div style="left:859px;top:394px;width:1px;height:18px;background:#dde8f5"></div>
<div style="left:822px;top:394px;width:37px;height:17px;overflow:hidden;white-space:nowrap;font-size:11px;line-height:18px;color:#000"><span style="display:inline-block;transform:scaleX(1.0);transform-origin:left">-- --</span></div>
<div style="left:897px;top:394px;width:1px;height:18px;background:#dde8f5"></div>
<div style="left:860px;top:394px;width:34px;height:17px;overflow:hidden;white-space:nowrap;font-size:11px;line-height:18px;color:#000;text-align:right"><span style="display:inline-block;transform:scaleX(1.0);transform-origin:right">100</span></div>
<div style="left:938px;top:394px;width:1px;height:18px;background:#dde8f5"></div>
<div style="left:898px;top:394px;width:37px;height:17px;overflow:hidden;white-space:nowrap;font-size:11px;line-height:18px;color:#000;text-align:right"><span style="display:inline-block;transform:scaleX(1.0);transform-origin:right">100</span></div>
<div style="left:1051px;top:394px;width:1px;height:18px;background:#dde8f5"></div>
<div style="left:245px;top:412px;width:806px;height:18px;background:#f4f9fe"></div>
<div style="left:245px;top:412px;width:12px;height:18px;background:linear-gradient(#f4f8fe,#c2d7f4);border-right:1px solid #6f98d4;border-bottom:1px solid #6f98d4"></div>
<div style="left:256px;top:429px;width:795px;height:1px;background:#dde8f5"></div>
<div style="left:303px;top:412px;width:1px;height:18px;background:#dde8f5"></div>
<div style="left:257px;top:412px;width:43px;height:17px;overflow:hidden;white-space:nowrap;font-size:11px;line-height:18px;color:#000;text-align:right"><span style="display:inline-block;transform:scaleX(1.0);transform-origin:right">583</span></div>
<div style="left:356px;top:412px;width:1px;height:18px;background:#dde8f5"></div>
<div style="left:305px;top:412px;width:51px;height:17px;overflow:hidden;white-space:nowrap;font-size:11px;line-height:18px;color:#000"><span style="display:inline-block;transform:scaleX(0.89);transform-origin:left">ALSAASIL</span></div>
<div style="left:426px;top:412px;width:1px;height:18px;background:#dde8f5"></div>
<svg style="position:absolute;left:360px;top:415px;" width="13" height="13" viewBox="0 0 13 13"><path d="M0.5 7.5 L3.5 5.8 L5.5 8.2 L11.8 0.3 L11.2 4.5 L5.3 11.5Z" fill="#a6cf5c" stroke="#7ba83c" stroke-width="0.6"/></svg>
<div style="left:376px;top:412px;width:50px;height:17px;overflow:hidden;white-space:nowrap;font-size:11px;line-height:18px;color:#000"><span style="display:inline-block;transform:scaleX(1.0);transform-origin:left">Onaylandı</span></div>
<div style="left:490px;top:412px;width:1px;height:18px;background:#dde8f5"></div>
<div style="left:428px;top:412px;width:62px;height:17px;overflow:hidden;white-space:nowrap;font-size:11px;line-height:18px;color:#000"><span style="display:inline-block;transform:scaleX(1.0);transform-origin:left">14.08.2025</span></div>
<div style="left:533px;top:412px;width:1px;height:18px;background:#dde8f5"></div>
<div style="left:671px;top:412px;width:1px;height:18px;background:#dde8f5"></div>
<div style="left:535px;top:412px;width:136px;height:17px;overflow:hidden;white-space:nowrap;font-size:11px;line-height:18px;color:#000"><span style="display:inline-block;transform:scaleX(1.0);transform-origin:left">Satış</span></div>
<div style="left:714px;top:412px;width:1px;height:18px;background:#dde8f5"></div>
<div style="left:673px;top:412px;width:41px;height:17px;overflow:hidden;white-space:nowrap;font-size:11px;line-height:18px;color:#000"><span style="display:inline-block;transform:scaleX(0.89);transform-origin:left">MERKEZ</span></div>
<div style="left:779px;top:412px;width:1px;height:18px;background:#dde8f5"></div>
<div style="left:716px;top:412px;width:63px;height:17px;overflow:hidden;white-space:nowrap;font-size:11px;line-height:18px;color:#000"><span style="display:inline-block;transform:scaleX(0.95);transform-origin:left">Bakiye Carisi</span></div>
<div style="left:820px;top:412px;width:1px;height:18px;background:#dde8f5"></div>
<div style="left:781px;top:412px;width:39px;height:17px;overflow:hidden;white-space:nowrap;font-size:11px;line-height:18px;color:#000"><span style="display:inline-block;transform:scaleX(1.0);transform-origin:left">-- -- -- -</span></div>
<div style="left:859px;top:412px;width:1px;height:18px;background:#dde8f5"></div>
<div style="left:822px;top:412px;width:37px;height:17px;overflow:hidden;white-space:nowrap;font-size:11px;line-height:18px;color:#000"><span style="display:inline-block;transform:scaleX(1.0);transform-origin:left">-- --</span></div>
<div style="left:897px;top:412px;width:1px;height:18px;background:#dde8f5"></div>
<div style="left:860px;top:412px;width:34px;height:17px;overflow:hidden;white-space:nowrap;font-size:11px;line-height:18px;color:#000;text-align:right"><span style="display:inline-block;transform:scaleX(1.0);transform-origin:right">20.000</span></div>
<div style="left:938px;top:412px;width:1px;height:18px;background:#dde8f5"></div>
<div style="left:898px;top:412px;width:37px;height:17px;overflow:hidden;white-space:nowrap;font-size:11px;line-height:18px;color:#000;text-align:right"><span style="display:inline-block;transform:scaleX(1.0);transform-origin:right">0</span></div>
<div style="left:1051px;top:412px;width:1px;height:18px;background:#dde8f5"></div>
<div style="left:245px;top:430px;width:806px;height:18px;background:#f3f9ef"></div>
<div style="left:245px;top:430px;width:12px;height:18px;background:linear-gradient(#f4f8fe,#c2d7f4);border-right:1px solid #6f98d4;border-bottom:1px solid #6f98d4"></div>
<div style="left:256px;top:447px;width:795px;height:1px;background:#dde8f5"></div>
<div style="left:303px;top:430px;width:1px;height:18px;background:#dde8f5"></div>
<div style="left:257px;top:430px;width:43px;height:17px;overflow:hidden;white-space:nowrap;font-size:11px;line-height:18px;color:#000;text-align:right"><span style="display:inline-block;transform:scaleX(1.0);transform-origin:right">584</span></div>
<div style="left:356px;top:430px;width:1px;height:18px;background:#dde8f5"></div>
<div style="left:305px;top:430px;width:51px;height:17px;overflow:hidden;white-space:nowrap;font-size:11px;line-height:18px;color:#000"><span style="display:inline-block;transform:scaleX(0.89);transform-origin:left">ALSAASIL</span></div>
<div style="left:426px;top:430px;width:1px;height:18px;background:#dde8f5"></div>
<svg style="position:absolute;left:360px;top:433px;" width="13" height="13" viewBox="0 0 13 13"><path d="M0.5 7.5 L3.5 5.8 L5.5 8.2 L11.8 0.3 L11.2 4.5 L5.3 11.5Z" fill="#a6cf5c" stroke="#7ba83c" stroke-width="0.6"/></svg>
<div style="left:376px;top:430px;width:50px;height:17px;overflow:hidden;white-space:nowrap;font-size:11px;line-height:18px;color:#000"><span style="display:inline-block;transform:scaleX(1.0);transform-origin:left">Onaylandı</span></div>
<div style="left:490px;top:430px;width:1px;height:18px;background:#dde8f5"></div>
<div style="left:428px;top:430px;width:62px;height:17px;overflow:hidden;white-space:nowrap;font-size:11px;line-height:18px;color:#000"><span style="display:inline-block;transform:scaleX(1.0);transform-origin:left">14.08.2025</span></div>
<div style="left:533px;top:430px;width:1px;height:18px;background:#dde8f5"></div>
<div style="left:671px;top:430px;width:1px;height:18px;background:#dde8f5"></div>
<div style="left:535px;top:430px;width:136px;height:17px;overflow:hidden;white-space:nowrap;font-size:11px;line-height:18px;color:#000"><span style="display:inline-block;transform:scaleX(1.0);transform-origin:left">Alış</span></div>
<div style="left:714px;top:430px;width:1px;height:18px;background:#dde8f5"></div>
<div style="left:673px;top:430px;width:41px;height:17px;overflow:hidden;white-space:nowrap;font-size:11px;line-height:18px;color:#000"><span style="display:inline-block;transform:scaleX(0.89);transform-origin:left">MERKEZ</span></div>
<div style="left:779px;top:430px;width:1px;height:18px;background:#dde8f5"></div>
<div style="left:716px;top:430px;width:63px;height:17px;overflow:hidden;white-space:nowrap;font-size:11px;line-height:18px;color:#000"><span style="display:inline-block;transform:scaleX(0.95);transform-origin:left">Bakiye Carisi</span></div>
<div style="left:820px;top:430px;width:1px;height:18px;background:#dde8f5"></div>
<div style="left:781px;top:430px;width:39px;height:17px;overflow:hidden;white-space:nowrap;font-size:11px;line-height:18px;color:#000"><span style="display:inline-block;transform:scaleX(1.0);transform-origin:left">-- -- -- -</span></div>
<div style="left:859px;top:430px;width:1px;height:18px;background:#dde8f5"></div>
<div style="left:822px;top:430px;width:37px;height:17px;overflow:hidden;white-space:nowrap;font-size:11px;line-height:18px;color:#000"><span style="display:inline-block;transform:scaleX(1.0);transform-origin:left">-- --</span></div>
<div style="left:897px;top:430px;width:1px;height:18px;background:#dde8f5"></div>
<div style="left:860px;top:430px;width:34px;height:17px;overflow:hidden;white-space:nowrap;font-size:11px;line-height:18px;color:#000;text-align:right"><span style="display:inline-block;transform:scaleX(1.0);transform-origin:right">0</span></div>
<div style="left:938px;top:430px;width:1px;height:18px;background:#dde8f5"></div>
<div style="left:898px;top:430px;width:37px;height:17px;overflow:hidden;white-space:nowrap;font-size:11px;line-height:18px;color:#000;text-align:right"><span style="display:inline-block;transform:scaleX(1.0);transform-origin:right">19.000</span></div>
<div style="left:1051px;top:430px;width:1px;height:18px;background:#dde8f5"></div>
<div style="left:245px;top:448px;width:806px;height:18px;background:#336600"></div>
<div style="left:256px;top:465px;width:795px;height:1px;background:#d8e000"></div>
<div style="left:303px;top:448px;width:1px;height:18px;background:#d8e000"></div>
<div style="left:257px;top:448px;width:43px;height:17px;overflow:hidden;white-space:nowrap;font-size:11px;line-height:18px;color:#f4ff00;text-align:right"><span style="display:inline-block;transform:scaleX(1.0);transform-origin:right">595</span></div>
<div style="left:356px;top:448px;width:1px;height:18px;background:#d8e000"></div>
<div style="left:305px;top:448px;width:51px;height:17px;overflow:hidden;white-space:nowrap;font-size:11px;line-height:18px;color:#f4ff00"><span style="display:inline-block;transform:scaleX(0.89);transform-origin:left">ALSAASIL</span></div>
<div style="left:426px;top:448px;width:1px;height:18px;background:#d8e000"></div>
<svg style="position:absolute;left:360px;top:451px;" width="13" height="13" viewBox="0 0 13 13"><path d="M0.5 7.5 L3.5 5.8 L5.5 8.2 L11.8 0.3 L11.2 4.5 L5.3 11.5Z" fill="#c4dc00" stroke="#a8c000" stroke-width="0.5"/></svg>
<div style="left:376px;top:448px;width:50px;height:17px;overflow:hidden;white-space:nowrap;font-size:11px;line-height:18px;color:#f4ff00"><span style="display:inline-block;transform:scaleX(1.0);transform-origin:left">Onaylandı</span></div>
<div style="left:490px;top:448px;width:1px;height:18px;background:#d8e000"></div>
<div style="left:428px;top:448px;width:62px;height:17px;overflow:hidden;white-space:nowrap;font-size:11px;line-height:18px;color:#f4ff00"><span style="display:inline-block;transform:scaleX(1.0);transform-origin:left">28.08.2025</span></div>
<div style="left:533px;top:448px;width:1px;height:18px;background:#d8e000"></div>
<div style="left:671px;top:448px;width:1px;height:18px;background:#d8e000"></div>
<div style="left:535px;top:448px;width:136px;height:17px;overflow:hidden;white-space:nowrap;font-size:11px;line-height:18px;color:#f4ff00"><span style="display:inline-block;transform:scaleX(1.0);transform-origin:left">Satış</span></div>
<div style="left:714px;top:448px;width:1px;height:18px;background:#d8e000"></div>
<div style="left:673px;top:448px;width:41px;height:17px;overflow:hidden;white-space:nowrap;font-size:11px;line-height:18px;color:#f4ff00"><span style="display:inline-block;transform:scaleX(0.89);transform-origin:left">MERKEZ</span></div>
<div style="left:779px;top:448px;width:1px;height:18px;background:#d8e000"></div>
<div style="left:716px;top:448px;width:63px;height:17px;overflow:hidden;white-space:nowrap;font-size:11px;line-height:18px;color:#f4ff00"><span style="display:inline-block;transform:scaleX(0.89);transform-origin:left">MÜŞTERİ 1</span></div>
<div style="left:820px;top:448px;width:1px;height:18px;background:#d8e000"></div>
<div style="left:781px;top:448px;width:39px;height:17px;overflow:hidden;white-space:nowrap;font-size:11px;line-height:18px;color:#f4ff00"><span style="display:inline-block;transform:scaleX(1.0);transform-origin:left">-- -- -- -</span></div>
<div style="left:859px;top:448px;width:1px;height:18px;background:#d8e000"></div>
<div style="left:822px;top:448px;width:37px;height:17px;overflow:hidden;white-space:nowrap;font-size:11px;line-height:18px;color:#f4ff00"><span style="display:inline-block;transform:scaleX(1.0);transform-origin:left">-- --</span></div>
<div style="left:897px;top:448px;width:1px;height:18px;background:#d8e000"></div>
<div style="left:860px;top:448px;width:34px;height:17px;overflow:hidden;white-space:nowrap;font-size:11px;line-height:18px;color:#f4ff00;text-align:right"><span style="display:inline-block;transform:scaleX(1.0);transform-origin:right">1.850</span></div>
<div style="left:938px;top:448px;width:1px;height:18px;background:#d8e000"></div>
<div style="left:898px;top:448px;width:37px;height:17px;overflow:hidden;white-space:nowrap;font-size:11px;line-height:18px;color:#f4ff00;text-align:right"><span style="display:inline-block;transform:scaleX(1.0);transform-origin:right">0</span></div>
<div style="left:1051px;top:448px;width:1px;height:18px;background:#d8e000"></div>
<div style="left:245px;top:466px;width:806px;height:18px;background:#336600"></div>
<div style="left:256px;top:483px;width:795px;height:1px;background:#d8e000"></div>
<div style="left:303px;top:466px;width:1px;height:18px;background:#d8e000"></div>
<div style="left:257px;top:466px;width:43px;height:17px;overflow:hidden;white-space:nowrap;font-size:11px;line-height:18px;color:#f4ff00;text-align:right"><span style="display:inline-block;transform:scaleX(1.0);transform-origin:right">596</span></div>
<div style="left:356px;top:466px;width:1px;height:18px;background:#d8e000"></div>
<div style="left:305px;top:466px;width:51px;height:17px;overflow:hidden;white-space:nowrap;font-size:11px;line-height:18px;color:#f4ff00"><span style="display:inline-block;transform:scaleX(0.89);transform-origin:left">ALSAASIL</span></div>
<div style="left:426px;top:466px;width:1px;height:18px;background:#d8e000"></div>
<svg style="position:absolute;left:360px;top:469px;" width="13" height="13" viewBox="0 0 13 13"><path d="M0.5 7.5 L3.5 5.8 L5.5 8.2 L11.8 0.3 L11.2 4.5 L5.3 11.5Z" fill="#c4dc00" stroke="#a8c000" stroke-width="0.5"/></svg>
<div style="left:376px;top:466px;width:50px;height:17px;overflow:hidden;white-space:nowrap;font-size:11px;line-height:18px;color:#f4ff00"><span style="display:inline-block;transform:scaleX(1.0);transform-origin:left">Onaylandı</span></div>
<div style="left:490px;top:466px;width:1px;height:18px;background:#d8e000"></div>
<div style="left:428px;top:466px;width:62px;height:17px;overflow:hidden;white-space:nowrap;font-size:11px;line-height:18px;color:#f4ff00"><span style="display:inline-block;transform:scaleX(1.0);transform-origin:left">8.09.2025 1</span></div>
<div style="left:533px;top:466px;width:1px;height:18px;background:#d8e000"></div>
<div style="left:671px;top:466px;width:1px;height:18px;background:#d8e000"></div>
<div style="left:535px;top:466px;width:136px;height:17px;overflow:hidden;white-space:nowrap;font-size:11px;line-height:18px;color:#f4ff00"><span style="display:inline-block;transform:scaleX(1.0);transform-origin:left">Satış</span></div>
<div style="left:714px;top:466px;width:1px;height:18px;background:#d8e000"></div>
<div style="left:673px;top:466px;width:41px;height:17px;overflow:hidden;white-space:nowrap;font-size:11px;line-height:18px;color:#f4ff00"><span style="display:inline-block;transform:scaleX(0.89);transform-origin:left">MERKEZ</span></div>
<div style="left:779px;top:466px;width:1px;height:18px;background:#d8e000"></div>
<div style="left:716px;top:466px;width:63px;height:17px;overflow:hidden;white-space:nowrap;font-size:11px;line-height:18px;color:#f4ff00"><span style="display:inline-block;transform:scaleX(0.89);transform-origin:left">MÜŞTERİ 1</span></div>
<div style="left:820px;top:466px;width:1px;height:18px;background:#d8e000"></div>
<div style="left:781px;top:466px;width:39px;height:17px;overflow:hidden;white-space:nowrap;font-size:11px;line-height:18px;color:#f4ff00"><span style="display:inline-block;transform:scaleX(1.0);transform-origin:left">-- -- -- -</span></div>
<div style="left:859px;top:466px;width:1px;height:18px;background:#d8e000"></div>
<div style="left:822px;top:466px;width:37px;height:17px;overflow:hidden;white-space:nowrap;font-size:11px;line-height:18px;color:#f4ff00"><span style="display:inline-block;transform:scaleX(1.0);transform-origin:left">-- --</span></div>
<div style="left:897px;top:466px;width:1px;height:18px;background:#d8e000"></div>
<div style="left:860px;top:466px;width:34px;height:17px;overflow:hidden;white-space:nowrap;font-size:11px;line-height:18px;color:#f4ff00;text-align:right"><span style="display:inline-block;transform:scaleX(1.0);transform-origin:right">1.000</span></div>
<div style="left:938px;top:466px;width:1px;height:18px;background:#d8e000"></div>
<div style="left:898px;top:466px;width:37px;height:17px;overflow:hidden;white-space:nowrap;font-size:11px;line-height:18px;color:#f4ff00;text-align:right"><span style="display:inline-block;transform:scaleX(1.0);transform-origin:right">0</span></div>
<div style="left:1051px;top:466px;width:1px;height:18px;background:#d8e000"></div>
<div style="left:245px;top:446px;width:806px;height:2px;background:#ffff00"></div>
<div style="left:245px;top:483px;width:806px;height:3px;background:#ffff00"></div>
<div style="left:245px;top:465px;width:806px;height:1px;background:#e0e800"></div>
<div style="left:245px;top:447px;width:12px;height:19px;background:linear-gradient(#f0f800,#d0e000);border:1px solid #7a9010"></div>
<div style="left:245px;top:465px;width:12px;height:19px;background:linear-gradient(#f0f800,#d0e000);border:1px solid #7a9010"></div>
<svg style="position:absolute;left:246px;top:468px;" width="9" height="12" viewBox="0 0 9 12"><path d="M2.5 2 L6.5 6 L2.5 10" stroke="#5a9010" stroke-width="2" fill="none"/></svg>
<div style="left:256px;top:466px;width:795px;height:17px;border:1px dotted #e08a20"></div>
<div style="left:245px;top:486px;width:806px;height:4px;background:#ffffff"></div>
<div style="left:245px;top:490px;width:176px;height:28px;background:linear-gradient(#e6f0fc 0%,#d8e7fa 45%,#c3daf7 55%,#cfe2f9 100%)"></div>
<div style="left:421px;top:490px;width:50px;height:28px;background:#e3eefd"></div>
<div style="left:470px;top:490px;width:581px;height:28px;background:linear-gradient(#eeeeee,#e8e8e8)"></div>
<div style="left:297px;top:490px;width:46px;height:28px;background:#ffffff"></div>
<div style="left:20px;width:600px;text-align:center;top:496px;height:16px;line-height:16px;font-size:12px;color:#000;font-weight:normal;white-space:nowrap;transform:scaleX(0.95);transform-origin:center;">64 / 64</div>
<svg style="position:absolute;left:248px;top:497px;" width="20" height="14" viewBox="0 0 20 14"><rect x="0" y="1" width="2.6" height="12" fill="#1f4d98"/><path d="M3 7 L10 1 V13Z M10 7 L17 1 V13Z" fill="#1f4d98"/></svg>
<svg style="position:absolute;left:276px;top:497px;" width="10" height="14" viewBox="0 0 10 14"><path d="M1 7 L8 1 V13Z" fill="#1f4d98"/></svg>
<svg style="position:absolute;left:352px;top:497px;" width="10" height="14" viewBox="0 0 10 14"><path d="M9 7 L2 1 V13Z" fill="#8f8f8f"/></svg>
<svg style="position:absolute;left:371px;top:497px;" width="20" height="14" viewBox="0 0 20 14"><path d="M8 7 L1.5 1 V13Z M14.5 7 L8 1 V13Z" fill="#8f8f8f"/><rect x="15.5" y="1" width="2.6" height="12" fill="#8f8f8f"/></svg>
<svg style="position:absolute;left:397px;top:496px;" width="22" height="16" viewBox="0 0 22 16"><path d="M2 10 Q4 3 11 3 Q16 3 18 7 L20 5 L20 13 L12 13 L15 10 Q13 7 10.5 7 Q7 7 5.5 10Z" fill="#1f4d98"/></svg>
<svg style="position:absolute;left:474px;top:498px;" width="8" height="12" viewBox="0 0 8 12"><path d="M7 1 L1 6 L7 11Z" fill="#a8b6cc"/></svg>
<svg style="position:absolute;left:1039px;top:498px;" width="8" height="12" viewBox="0 0 8 12"><path d="M1 1 L7 6 L1 11Z" fill="#a8b6cc"/></svg>
<div style="left:812px;top:526px;width:105px;height:33px;border:1px solid #9aae48;border-radius:3px;background:linear-gradient(#e2f222 0%,#dcf000 45%,#d6ea00 55%,#d8ec00 100%)"></div>
<svg style="position:absolute;left:828px;top:529px;" width="36" height="28" viewBox="0 0 36 28"><path d="M4 15 L12 23 L31 4" stroke="#6a9020" stroke-width="5.5" fill="none" stroke-linejoin="miter"/><path d="M4 15 L12 23 L31 4" stroke="#d8f07a" stroke-width="3" fill="none" stroke-linejoin="miter"/></svg>
<div style="left:865px;top:535px;height:16px;line-height:16px;font-size:12px;color:#000;font-weight:normal;white-space:nowrap;transform:scaleX(0.86);transform-origin:left;"><u>T</u>amam</div>
<div style="left:945px;top:526px;width:105px;height:33px;border:1px solid #8b9ebc;border-radius:3px;background:linear-gradient(#f8fafd 0%,#edf3f9 45%,#dce7f4 55%,#e6eef7 100%)"></div>
<svg style="position:absolute;left:962px;top:528px;" width="32" height="30" viewBox="0 0 32 30"><path d="M5 5 L26 26 M26 5 L5 26" stroke="#9a3018" stroke-width="6" stroke-linecap="square"/><path d="M5 5 L26 26 M26 5 L5 26" stroke="#e4603e" stroke-width="3.6" stroke-linecap="square"/></svg>
<div style="left:997px;top:535px;height:16px;line-height:16px;font-size:12px;color:#000;font-weight:normal;white-space:nowrap;transform:scaleX(0.87);transform-origin:left;"><u>V</u>azgeç</div>
<div style="left:223px;top:441px;width:29px;height:29px;background:#ff0000;border-radius:50%"></div>
<div style="left:-62.5px;width:600px;text-align:center;top:445px;height:20px;line-height:20px;font-size:16.5px;color:#fff;font-weight:normal;white-space:nowrap;-webkit-text-stroke:0.1px #fff;">1</div>
<div style="left:797px;top:510px;width:29px;height:29px;background:#ff0000;border-radius:50%"></div>
<div style="left:511.5px;width:600px;text-align:center;top:514px;height:20px;line-height:20px;font-size:16.5px;color:#fff;font-weight:normal;white-space:nowrap;-webkit-text-stroke:0.1px #fff;">2</div>
</body></html>
